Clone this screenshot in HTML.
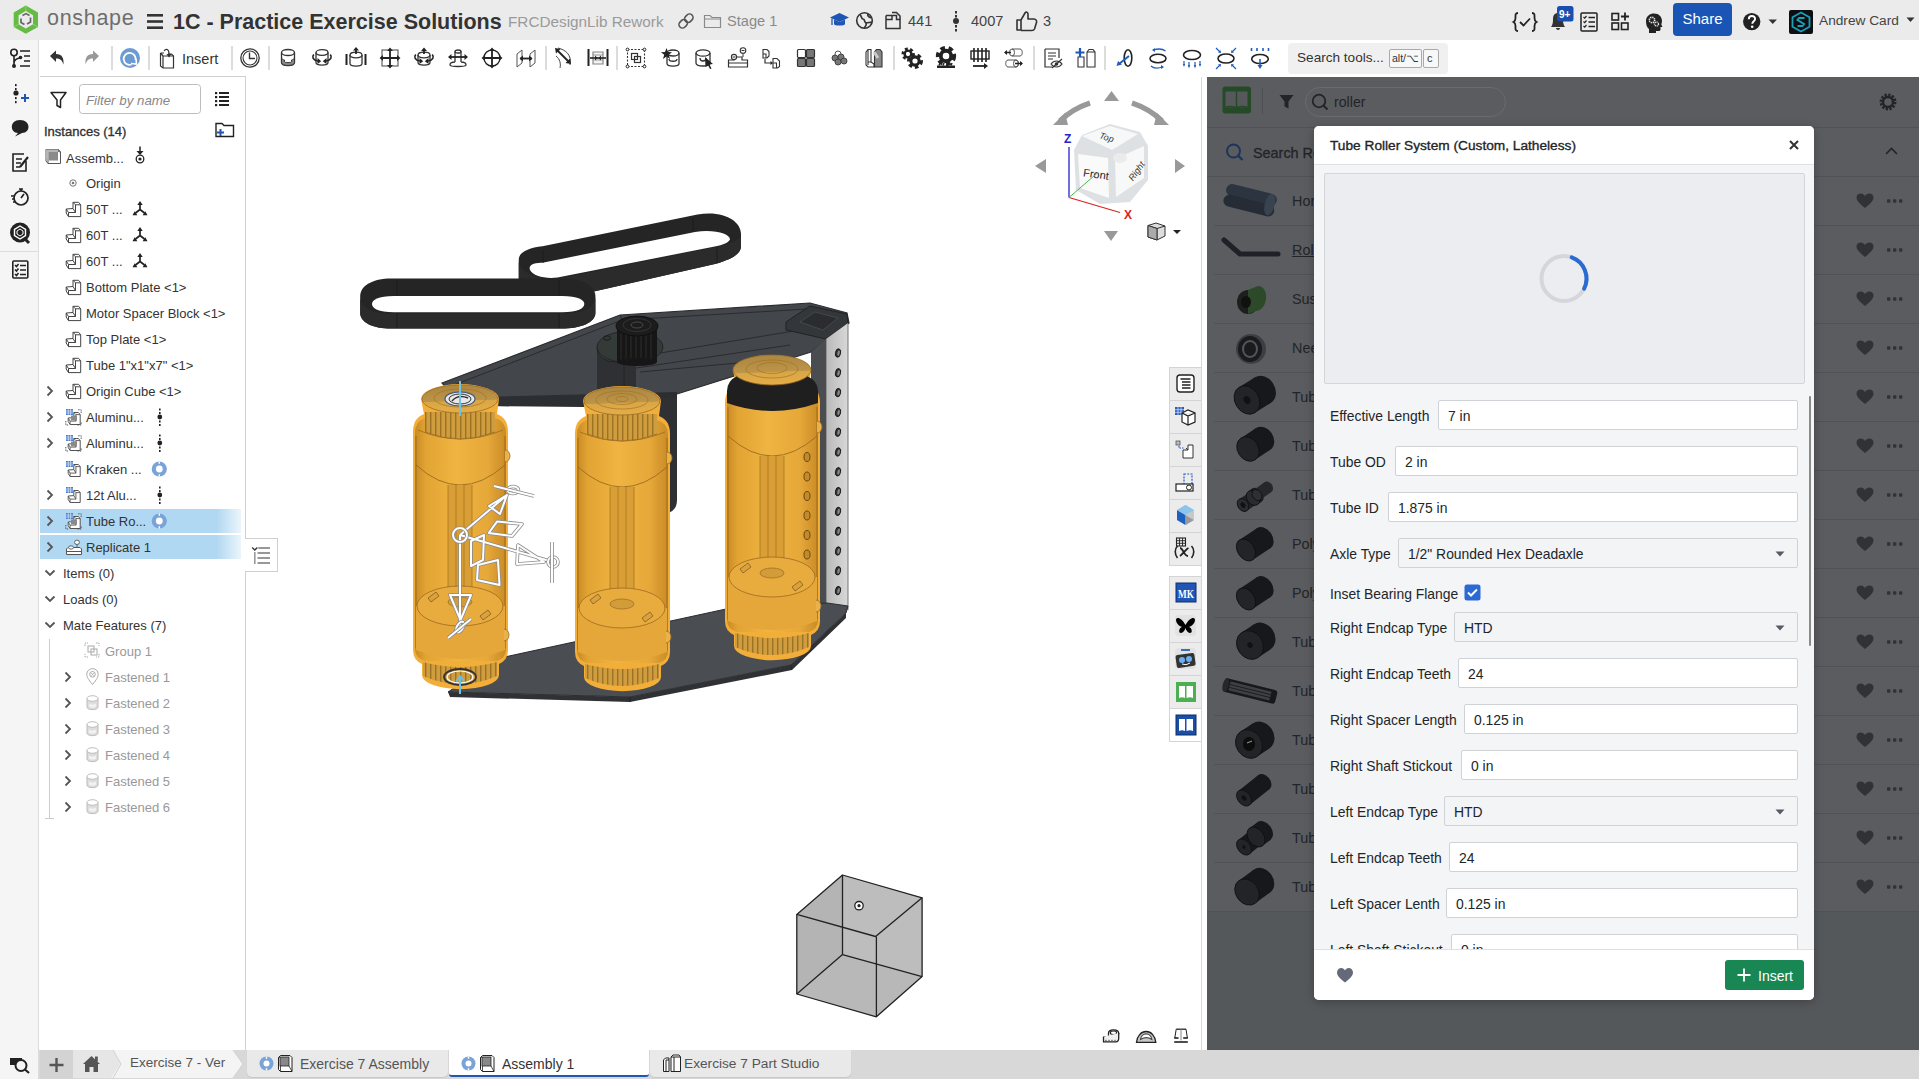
<!DOCTYPE html>
<html><head><meta charset="utf-8"><style>
*{box-sizing:border-box;margin:0;padding:0}
html,body{width:1919px;height:1079px;overflow:hidden;background:#fff;font-family:"Liberation Sans",sans-serif;color:#333}
.a{position:absolute}
.t{position:absolute;white-space:nowrap;font-family:"Liberation Sans",sans-serif}
svg{position:absolute;overflow:visible}

</style></head><body>
<div class="a" style="left:0;top:0;width:1919px;height:40px;background:#ebebeb"></div>
<svg style="left:0;top:0" width="1919" height="40">
 <path d="M25.8,5.5 L38,12.4 V27 L25.8,33.8 L13.7,27 V12.4Z M25.8,11 L33,15.2 V24.2 L25.8,28.4 L18.6,24.2 V15.2Z" fill="#66bb44" fill-rule="evenodd"/>
 <path d="M25.8,5.5 L25.8,11 M38,27 L33,24.2 M13.7,27 L18.6,24.2" stroke="#8fd46a" stroke-width="1"/>
 <path d="M22.5,15.5 L26,13.6 L29.5,15.5 M30.5,17.5 V22 L27,24 M24.5,24.5 L21,22.5 V18.5" stroke="#666" stroke-width="1.7" fill="none"/>
 <rect x="147" y="14" width="16" height="2.6" fill="#333"/><rect x="147" y="20.2" width="16" height="2.6" fill="#333"/><rect x="147" y="26.4" width="16" height="2.6" fill="#333"/>
</svg>
<div class="t" style="left:47px;top:6px;font-size:21.5px;line-height:24px;color:#6e6e6e;letter-spacing:0.7px">onshape</div>
<div class="t" style="left:173px;top:9px;font-size:21.5px;line-height:26px;font-weight:bold;color:#333">1C - Practice Exercise Solutions</div>
<div class="t" style="left:508px;top:12px;font-size:15.3px;line-height:20px;color:#9a9a9a">FRCDesignLib Rework</div>
<div class="t" style="left:727px;top:11px;font-size:14.6px;line-height:20px;color:#8a8a8a">Stage 1</div>
<div class="t" style="left:908px;top:11px;font-size:14.6px;line-height:20px;color:#444">441</div>
<div class="t" style="left:971px;top:11px;font-size:14.6px;line-height:20px;color:#444">4007</div>
<div class="t" style="left:1043px;top:11px;font-size:14.6px;line-height:20px;color:#444">3</div>
<div class="a" style="left:1673px;top:3px;width:59px;height:33px;background:#1a55b5;border-radius:4px"></div>
<div class="t" style="left:1673px;top:9px;width:59px;text-align:center;font-size:15px;line-height:20px;color:#fff">Share</div>
<div class="t" style="left:1819px;top:11px;font-size:13.7px;line-height:20px;color:#444">Andrew Card</div>
<svg style="left:676px;top:12px" width="20" height="18" viewBox="0 0 20 18"><g transform="rotate(-45 10 9)"><rect x="1.5" y="5.5" width="9" height="7" rx="3.5" fill="none" stroke="#555" stroke-width="1.6"/><rect x="9.5" y="5.5" width="9" height="7" rx="3.5" fill="none" stroke="#555" stroke-width="1.6"/></g></svg>
<svg style="left:703px;top:12px" width="20" height="18" viewBox="0 0 20 18"><path d="M1.5,3.5 H7 L9,5.5 H17.5 V15.5 H1.5Z" fill="none" stroke="#8a8a8a" stroke-width="1.2"/><path d="M1.5,7 H17.5" stroke="#8a8a8a" stroke-width="1"/></svg>
<svg style="left:829px;top:11px" width="22" height="18" viewBox="0 0 22 18"><path d="M1,6.5 L10.5,2 L20,6.5 L10.5,11Z" fill="#1f56b3"/><path d="M5,8.5 V13 C5,15 16,15 16,13 V8.5 L10.5,11Z" fill="#1f56b3"/><path d="M3,7.5 V14" stroke="#1f56b3" stroke-width="1.3"/></svg>
<svg style="left:855px;top:11px" width="20" height="20" viewBox="0 0 20 20"><circle cx="9.5" cy="9.5" r="7.8" fill="none" stroke="#333" stroke-width="1.6"/><path d="M5,4 C7,5 6,8 8,8 C10,8 9,11 11,12 C12,14 10,16 9,17 M13,3 C12,5 14,6 16,7 M11,12 C13,11 15,12 17,11" stroke="#333" stroke-width="1.7" fill="none"/></svg>
<svg style="left:883px;top:11px" width="20" height="20" viewBox="0 0 20 20"><path d="M3,4.5 H9 M3,4.5 V17.5 H17 V8.5 H13.5 V4.5 H9 V8.5 H3" fill="none" stroke="#333" stroke-width="1.5"/><path d="M9,1.5 H13.5 L17,5 V8.5" fill="none" stroke="#333" stroke-width="1.5"/></svg>
<svg style="left:951px;top:10px" width="10" height="22" viewBox="0 0 10 22"><g fill="#333"><rect x="4" y="1" width="2" height="2.5"/><rect x="4" y="5" width="2" height="2.5"/><circle cx="5" cy="11" r="3"/><rect x="4" y="15" width="2" height="2.5"/><rect x="4" y="19" width="2" height="2.5"/></g></svg>
<svg style="left:1015px;top:10px" width="24" height="22" viewBox="0 0 24 22"><path d="M2,10 H6 V20 H2Z M6,10 L10,3 C11,1.5 13,2 13,4 V9 H19 C21,9 22,11 21.5,12.5 L19.5,19 C19,20 18,20.5 17,20.5 H6" fill="none" stroke="#333" stroke-width="1.6" stroke-linejoin="round"/></svg>
<svg style="left:1512px;top:11px" width="26" height="22" viewBox="0 0 26 22"><path d="M6,2 C3,2 3.5,4 3.5,7 C3.5,9.5 2.5,10.5 1.5,11 C2.5,11.5 3.5,12.5 3.5,15 C3.5,18 3,20 6,20 M20,2 C23,2 22.5,4 22.5,7 C22.5,9.5 23.5,10.5 24.5,11 C23.5,11.5 22.5,12.5 22.5,15 C22.5,18 23,20 20,20" fill="none" stroke="#222" stroke-width="1.8"/><path d="M8,11 L11.5,14.5 L18,7.5" fill="none" stroke="#222" stroke-width="1.8"/></svg>
<svg style="left:1546px;top:5px" width="30" height="28" viewBox="0 0 30 28"><path d="M5,22 H19 C17.5,20 17,18 17,14 C17,10 15,8 12,8 C9,8 7,10 7,14 C7,18 6.5,20 5,22Z" fill="#333"/><path d="M10,23 C10,25.5 14,25.5 14,23Z" fill="#333"/><rect x="11" y="1" width="16.5" height="15.5" rx="2.5" fill="#1a4fb0"/><text x="13" y="13" font-family="Liberation Sans" font-weight="bold" font-size="10" fill="#fff">9+</text></svg>
<svg style="left:1579px;top:11px" width="20" height="22" viewBox="0 0 20 22"><rect x="2" y="2" width="16" height="18" rx="1" fill="none" stroke="#222" stroke-width="1.5"/><path d="M4.5,6 L5.7,7.2 L7.5,5 M4.5,10.5 L5.7,11.7 L7.5,9.5 M4.5,15 L5.7,16.2 L7.5,14" fill="none" stroke="#222" stroke-width="1.2"/><path d="M9.5,6.5 H16 M9.5,11 H16 M9.5,15.5 H16" stroke="#222" stroke-width="1.5"/></svg>
<svg style="left:1610px;top:11px" width="22" height="22" viewBox="0 0 22 22"><rect x="2" y="2.5" width="6.5" height="6.5" fill="none" stroke="#222" stroke-width="1.6"/><rect x="2" y="12" width="6.5" height="6.5" fill="none" stroke="#222" stroke-width="1.6"/><rect x="11.5" y="12" width="6.5" height="6.5" fill="none" stroke="#222" stroke-width="1.6"/><path d="M15,1.5 V9.5 M11,5.5 H19" stroke="#222" stroke-width="1.8"/></svg>
<svg style="left:1643px;top:12px" width="22" height="22" viewBox="0 0 22 22"><path d="M3,9 C3,4 7,1.5 11,1.5 C16,1.5 19,5 19,9 C19,11 18,12 18.5,13 L19.5,15 H17.5 V17.5 C17.5,18.5 16.5,19 15.5,19 H13 V21 H6 V17 C4,15.5 3,13 3,9Z" fill="#222"/><circle cx="9" cy="8" r="2.7" fill="none" stroke="#ebebeb" stroke-width="1.6" stroke-dasharray="1.3 0.8"/><circle cx="13.5" cy="12" r="2" fill="none" stroke="#ebebeb" stroke-width="1.4" stroke-dasharray="1 0.7"/></svg>
<svg style="left:1742px;top:12px" width="22" height="22" viewBox="0 0 22 22"><circle cx="9.7" cy="9.6" r="8.7" fill="#222"/><path d="M6.8,7.2 C6.8,5 8.2,4 9.9,4 C11.8,4 13.1,5.2 13.1,6.9 C13.1,9.3 10.3,9.3 10.3,11.8" fill="none" stroke="#fff" stroke-width="1.9"/><circle cx="10.2" cy="14.8" r="1.3" fill="#fff"/></svg>
<svg style="left:1768px;top:19px" width="10" height="6" viewBox="0 0 10 6"><path d="M0.5,0.5 H9 L4.75,5Z" fill="#333"/></svg>
<svg style="left:1789px;top:10px" width="24" height="24" viewBox="0 0 24 24"><rect x="0" y="0" width="24" height="24" rx="2" fill="#0d0f12"/><path d="M12,2.5 L20.5,7.3 V16.7 L12,21.5 L3.5,16.7 V7.3Z" fill="none" stroke="#1aa0b8" stroke-width="1.8"/><path d="M15.5,8 H10 L8.5,10 L15,14 L13.5,16 H8.5" fill="none" stroke="#1aa0b8" stroke-width="2"/></svg>
<svg style="left:1906px;top:17px" width="10" height="6" viewBox="0 0 10 6"><path d="M0.5,0.5 H8.5 L4.5,5Z" fill="#333"/></svg><div class="a" style="left:0;top:40px;width:39px;height:1039px;background:#f5f5f5;border-right:1px solid #dcdcdc"></div>
<div class="a" style="left:40px;top:76px;width:206px;height:974px;background:#fff;border-top:1px solid #d0d0d0;border-right:1px solid #d0d0d0"></div>
<div class="a" style="left:1288px;top:43px;width:160px;height:31px;background:#f0f0f0;border-radius:4px"></div>
<div class="t" style="left:1297px;top:48px;font-size:13.6px;line-height:20px;color:#333">Search tools...</div>
<div class="a" style="left:1389px;top:49px;width:33px;height:19px;border:1px solid #aaa;border-radius:2px;background:#f8f8f8"></div>
<div class="t" style="left:1392px;top:49px;font-size:10.5px;line-height:19px;color:#333">alt/⌥</div>
<div class="a" style="left:1423px;top:49px;width:16px;height:19px;border:1px solid #aaa;border-radius:2px;background:#f8f8f8"></div>
<div class="t" style="left:1427px;top:49px;font-size:11px;line-height:18px;color:#333">c</div>
<div class="t" style="left:182px;top:49px;font-size:14.5px;line-height:20px;color:#333">Insert</div>
<svg style="left:44.5px;top:46px" width="24" height="24" viewBox="0 0 24 24"><path d="M5,10 L11,4.5 V8 C17,8 19,12 18.5,18.5 C17,14 15,12.5 11,12.5 V16 Z" fill="#333"/></svg>
<svg style="left:80px;top:46px" width="24" height="24" viewBox="0 0 24 24"><path d="M19,10 L13,4.5 V8 C7,8 5,12 5.5,18.5 C7,14 9,12.5 13,12.5 V16 Z" fill="#999"/></svg>
<div class="a" style="left:111px;top:46px;width:2px;height:24px;background:#dcdcdc"></div>
<svg style="left:118px;top:46px" width="24" height="24" viewBox="0 0 24 24"><circle cx="12" cy="12" r="10" fill="#6c9bd2"/><path d="M13.5,18.5 A6,6 0 1 1 17.5,14" stroke="#fff" stroke-width="1.8" fill="none"/><path d="M18,12.5 L18.5,18 L13,17.5" stroke="#fff" stroke-width="1.6" fill="none"/></svg>
<div class="a" style="left:148px;top:46px;width:2px;height:24px;background:#dcdcdc"></div>
<svg style="left:156px;top:46px" width="24" height="24" viewBox="0 0 24 24"><path d="M4.5,7 V20 L7,22 H17.5 V10 L15.5,8 H12" stroke="#333" stroke-width="1.2" fill="none"/><path d="M4.5,7 H8 M7,22 V10 H17.5 M7,10 L4.5,7" stroke="#333" stroke-width="1.2" fill="none"/><path d="M8,5 C10,2 13,3 13,8" stroke="#333" stroke-width="1.2" fill="none"/><path d="M10.5,8 L13,11.5 L15.5,8Z" fill="#333"/></svg>
<div class="a" style="left:231px;top:46px;width:2px;height:24px;background:#dcdcdc"></div>
<svg style="left:238px;top:46px" width="24" height="24" viewBox="0 0 24 24"><circle cx="12" cy="12" r="9.2" stroke="#333" stroke-width="1.3" fill="none"/><circle cx="12" cy="12" r="7" stroke="#333" stroke-width="1.1" fill="none"/><path d="M11.5,6.5 V12.5 H17" stroke="#333" stroke-width="1.4" fill="none"/></svg>
<div class="a" style="left:268px;top:46px;width:2px;height:24px;background:#dcdcdc"></div>
<svg style="left:276px;top:46px" width="24" height="24" viewBox="0 0 24 24"><ellipse cx="12" cy="6.5" rx="6.5" ry="3" stroke="#333" stroke-width="1.3" fill="#fff"/><path d="M5.5,6.5 V16.5 C5.5,20.5 18.5,20.5 18.5,16.5 V6.5" stroke="#333" stroke-width="1.3" fill="none"/><path d="M5.5,11 C5.5,14 8.5,14 8.5,14 V15.5 C8.5,17 15.5,17 15.5,15.5 V14 C15.5,14 18.5,14 18.5,11 V16.5 C18.5,20.5 5.5,20.5 5.5,16.5Z" fill="#888" stroke="#333" stroke-width="1"/></svg>
<svg style="left:310px;top:46px" width="24" height="24" viewBox="0 0 24 24"><ellipse cx="12" cy="6.5" rx="6" ry="2.8" stroke="#333" stroke-width="1.3" fill="none"/><path d="M6,6.5 V16.5 C6,20 18,20 18,16.5 V6.5" stroke="#333" stroke-width="1.3" fill="none"/><path d="M3.8,8.5 C1.5,11 3,14 8,15 M20.2,8.5 C22.5,11 21,14 16,15" stroke="#222" stroke-width="1.7" fill="none"/><path d="M7.5,12 L11.2,15.2 L7.5,18Z M16.5,12 L12.8,15.2 L16.5,18Z" fill="#222"/></svg>
<svg style="left:344px;top:46px" width="24" height="24" viewBox="0 0 24 24"><ellipse cx="12" cy="9" rx="6" ry="2.8" stroke="#333" stroke-width="1.3" fill="none"/><path d="M6,9 V17.5 C6,21 18,21 18,17.5 V9" stroke="#333" stroke-width="1.3" fill="none"/><path d="M12,8 V3" stroke="#222" stroke-width="1.8"/><path d="M9,4.5 L12,1 L15,4.5Z" fill="#222"/><rect x="1.5" y="8" width="2" height="11" fill="#222"/><rect x="20.5" y="8" width="2" height="11" fill="#222"/></svg>
<svg style="left:378px;top:46px" width="24" height="24" viewBox="0 0 24 24"><rect x="4" y="4" width="16" height="16" stroke="#444" stroke-width="1" fill="none"/><path d="M12,3 V21 M3,12 H21" stroke="#222" stroke-width="1.8"/><path d="M9,5 L12,1.5 L15,5Z M9,19 L12,22.5 L15,19Z M5,9 L1.5,12 L5,15Z M19,9 L22.5,12 L19,15Z" fill="#222"/></svg>
<svg style="left:412px;top:46px" width="24" height="24" viewBox="0 0 24 24"><ellipse cx="12" cy="9" rx="6" ry="2.8" stroke="#333" stroke-width="1.3" fill="none"/><path d="M6,9 V16.5 C6,20 18,20 18,16.5 V9" stroke="#333" stroke-width="1.3" fill="none"/><path d="M12,8 V3.5" stroke="#222" stroke-width="1.8"/><path d="M9,5 L12,1.5 L15,5Z" fill="#222"/><path d="M3.8,8.5 C1.5,11 3,14 8,15 M20.2,8.5 C22.5,11 21,14 16,15" stroke="#222" stroke-width="1.7" fill="none"/><path d="M7.5,12 L11.2,15.2 L7.5,18Z M16.5,12 L12.8,15.2 L16.5,18Z" fill="#222"/></svg>
<svg style="left:446px;top:46px" width="24" height="24" viewBox="0 0 24 24"><ellipse cx="12" cy="5.5" rx="3" ry="1.5" stroke="#333" stroke-width="1.3" fill="none"/><path d="M9,5.5 V16 M15,5.5 V16 M9,16 C5,16 4,17 4,19 C4,21 20,21 20,19 C20,17 19,16 15,16" stroke="#333" stroke-width="1.3" fill="none"/><path d="M3,11 H21" stroke="#222" stroke-width="1.8"/><path d="M5.5,8 L2,11 L5.5,14Z M18.5,8 L22,11 L18.5,14Z" fill="#222"/></svg>
<svg style="left:480px;top:46px" width="24" height="24" viewBox="0 0 24 24"><circle cx="12" cy="12" r="8" stroke="#222" stroke-width="1.4" fill="none"/><path d="M12,3 V21 M3,12 H21" stroke="#222" stroke-width="1.8"/><path d="M9,5 L12,1.5 L15,5Z M9,19 L12,22.5 L15,19Z M5,9 L1.5,12 L5,15Z M19,9 L22.5,12 L19,15Z" fill="#222"/></svg>
<svg style="left:514px;top:46px" width="24" height="24" viewBox="0 0 24 24"><path d="M3,8 L8,4 V17 L3,21Z M16,8 L21,4 V17 L16,21Z" stroke="#555" stroke-width="1" fill="none"/><path d="M6,12.5 H18" stroke="#222" stroke-width="1.8"/><path d="M9,9.5 L5.5,12.5 L9,15.5Z M15,9.5 L18.5,12.5 L15,15.5Z" fill="#222"/></svg>
<div class="a" style="left:545px;top:46px;width:2px;height:24px;background:#dcdcdc"></div>
<svg style="left:552px;top:46px" width="24" height="24" viewBox="0 0 24 24"><path d="M6,2 C14,4 20,9 18,19 M4,10 C8,13 9,18 8,22" stroke="#444" stroke-width="1" fill="none"/><path d="M5,4 L17,16" stroke="#222" stroke-width="1.8"/><path d="M3,2 L8.5,3 L4,7.5Z M19,18 L13.5,17 L18,12.5Z" fill="#222"/></svg>
<svg style="left:586.3px;top:46px" width="24" height="24" viewBox="0 0 24 24"><rect x="1.5" y="3" width="2" height="17" fill="#222"/><rect x="20.5" y="3" width="2" height="17" fill="#222"/><path d="M7,6 H17 V18 H7Z" stroke="#888" stroke-width="1.2" fill="#f3f3f3"/><path d="M7,9 H17 M7,14 H17" stroke="#999" stroke-width="1"/><path d="M4,12 H20" stroke="#222" stroke-width="1.6"/><path d="M9,9.5 L11.5,12 L9,14.5Z M15,9.5 L12.5,12 L15,14.5Z" fill="#222"/></svg>
<div class="a" style="left:616px;top:46px;width:2px;height:24px;background:#dcdcdc"></div>
<svg style="left:624px;top:46px" width="24" height="24" viewBox="0 0 24 24"><rect x="3.5" y="3.5" width="17" height="17" stroke="#333" stroke-width="1.1" stroke-dasharray="2 1.5" fill="none"/><circle cx="3.5" cy="3.5" r="1.4" fill="#fff" stroke="#222"/><circle cx="20.5" cy="3.5" r="1.4" fill="#fff" stroke="#222"/><circle cx="3.5" cy="20.5" r="1.4" fill="#fff" stroke="#222"/><circle cx="20.5" cy="20.5" r="1.4" fill="#fff" stroke="#222"/><rect x="7.5" y="7.5" width="6" height="6" stroke="#333" stroke-width="1.2" fill="none"/><rect x="10.5" y="10.5" width="6" height="6" stroke="#333" stroke-width="1.2" fill="none"/></svg>
<svg style="left:658.5px;top:46px" width="24" height="24" viewBox="0 0 24 24"><ellipse cx="14" cy="7" rx="6" ry="3" stroke="#333" stroke-width="1.3" fill="none"/><path d="M8,7 V17.5 C8,21 20,21 20,17.5 V7" stroke="#333" stroke-width="1.3" fill="none"/><path d="M10,13 C10,16 18,16 18,13" stroke="#333" stroke-width="1.3" fill="none"/><path d="M7.5,2 L9,6 L13,6.2 L9.8,8.8 L11,13 L7.5,10.5 L4,13 L5.2,8.8 L2,6.2 L6,6Z" fill="#222"/></svg>
<svg style="left:692px;top:46px" width="24" height="24" viewBox="0 0 24 24"><ellipse cx="11" cy="7" rx="7" ry="3.2" stroke="#333" stroke-width="1.3" fill="none"/><path d="M4,7 V17 C4,21 18,21 18,17 V7" stroke="#333" stroke-width="1.3" fill="none"/><path d="M8,12 C8,16 14,16 14,12" stroke="#333" stroke-width="1.3" fill="none"/><path d="M13,11 L21,18 L17.5,18.5 L19.5,22.5 L18,23 L16,19 L13.5,21Z" fill="#222"/></svg>
<svg style="left:726.3px;top:46px" width="24" height="24" viewBox="0 0 24 24"><path d="M2.5,14 H8 V11 H16 V14 H21.5 V21 H2.5Z M2.5,17 H21.5" stroke="#333" stroke-width="1.2" fill="none"/><circle cx="8" cy="11" r="2.6" fill="#fff" stroke="#333" stroke-width="1.1"/><circle cx="17" cy="4.5" r="2.8" fill="#fff" stroke="#333" stroke-width="1.1"/><path d="M17,7.5 V11 M6.5,11 H9.5 M15.5,4.5 H18.5" stroke="#333" stroke-width="1"/></svg>
<svg style="left:760px;top:46px" width="24" height="24" viewBox="0 0 24 24"><path d="M3,3.5 H7 L9,5.5 V10 L7,12 H3 Z M3,3.5 V8 H6 V12" stroke="#333" stroke-width="1.1" fill="none"/><path d="M13,12.5 H17 L19.5,15 V20.5 L17.5,22 H13 Z M13,12.5 V17 H16.5 V22" stroke="#333" stroke-width="1.1" fill="none"/><path d="M5,13 V17 H11" stroke="#333" stroke-width="1.2" fill="none"/><path d="M10.5,15 L13,17 L10.5,19Z" fill="#222"/></svg>
<svg style="left:794.2px;top:46px" width="24" height="24" viewBox="0 0 24 24"><rect x="3.5" y="3.5" width="8" height="8" rx="1" fill="#fff" stroke="#333" stroke-width="1.2"/><rect x="12.5" y="3.5" width="8" height="8" rx="1" fill="#777" stroke="#333" stroke-width="1.2"/><rect x="3.5" y="12.5" width="8" height="8" rx="1" fill="#777" stroke="#333" stroke-width="1.2"/><rect x="12.5" y="12.5" width="8" height="8" rx="1" fill="#777" stroke="#333" stroke-width="1.2"/></svg>
<svg style="left:828.4px;top:46px" width="24" height="24" viewBox="0 0 24 24"><circle cx="10" cy="8" r="3" fill="#fff" stroke="#555"/><circle cx="7" cy="12" r="3" fill="#777" stroke="#444"/><circle cx="13" cy="11" r="3" fill="#777" stroke="#444"/><circle cx="10" cy="16" r="3" fill="#777" stroke="#444"/><circle cx="16" cy="15" r="3" fill="#777" stroke="#444"/></svg>
<svg style="left:862px;top:46px" width="24" height="24" viewBox="0 0 24 24"><path d="M4,6 L6,3.5 H9 V16 L12,18 V21 H6 L4,19Z M6,3.5 V19 M9,16 H6" stroke="#333" stroke-width="1.1" fill="none"/><path d="M12.5,21 V6 L14.5,3.5 H18 L20,6 V21Z" fill="#888" stroke="#333" stroke-width="1.1"/><path d="M12,6 L16,12" stroke="#ccc" stroke-width="3"/></svg>
<div class="a" style="left:893px;top:46px;width:2px;height:24px;background:#dcdcdc"></div>
<svg style="left:900px;top:46px" width="24" height="24" viewBox="0 0 24 24"><circle cx="8" cy="8" r="4.5" fill="none" stroke="#222" stroke-width="4.05" stroke-dasharray="2.475 2.025"/><circle cx="8" cy="8" r="3.375" fill="none" stroke="#222" stroke-width="2.475"/><circle cx="15" cy="15" r="5.5" fill="none" stroke="#222" stroke-width="4.95" stroke-dasharray="3.0250000000000004 2.475"/><circle cx="15" cy="15" r="4.125" fill="none" stroke="#222" stroke-width="3.0250000000000004"/></svg>
<svg style="left:934.2px;top:46px" width="24" height="24" viewBox="0 0 24 24"><circle cx="12" cy="10" r="7" fill="none" stroke="#222" stroke-width="6.3" stroke-dasharray="3.8500000000000005 3.15"/><circle cx="12" cy="10" r="5.25" fill="none" stroke="#222" stroke-width="3.8500000000000005"/><rect x="3" y="19.5" width="18" height="2.5" fill="#222"/><path d="M5,19.5 L6,17 M9,19.5 L10,17 M13,19.5 L14,17 M17,19.5 L18,17" stroke="#222" stroke-width="1.5"/></svg>
<svg style="left:968px;top:46px" width="24" height="24" viewBox="0 0 24 24"><rect x="3" y="5" width="18" height="8" fill="none" stroke="#222" stroke-width="1.4"/><path d="M6,2 V16 M10,2 V16 M14,2 V16 M18,2 V16" stroke="#222" stroke-width="1.6"/><path d="M5,20 H17" stroke="#222" stroke-width="1.8"/><path d="M16,17 L20,20 L16,23Z" fill="#222"/></svg>
<svg style="left:1002px;top:46px" width="24" height="24" viewBox="0 0 24 24"><path d="M10,3 H18 C21,3 21,10 18,10 H10" stroke="#555" stroke-width="1" fill="none"/><ellipse cx="10" cy="6.5" rx="2.5" ry="3.5" fill="none" stroke="#555"/><path d="M6,14 H14 C17,14 17,21 14,21 H6 C3,21 3,14 6,14" stroke="#555" stroke-width="1" fill="none"/><ellipse cx="14" cy="17.5" rx="2.5" ry="3.5" fill="none" stroke="#555"/><path d="M3,6.5 H9 M13,17.5 H20" stroke="#222" stroke-width="1.6"/><path d="M5,4 L2,6.5 L5,9Z M18,15 L21,17.5 L18,20Z" fill="#222"/></svg>
<div class="a" style="left:1033px;top:46px;width:2px;height:24px;background:#dcdcdc"></div>
<svg style="left:1041px;top:46px" width="24" height="24" viewBox="0 0 24 24"><path d="M4,3 H18 V12 M4,3 V21 H11" stroke="#333" stroke-width="1.2" fill="none"/><path d="M7,7 H15 M7,10 H15 M7,13 H12" stroke="#333" stroke-width="1.2"/><path d="M10,18 C13,14 18,14 21,18 C18,22 13,22 10,18Z" fill="none" stroke="#333" stroke-width="1.2"/><circle cx="15.5" cy="18" r="1.8" fill="#333"/><path d="M11,22 L21,13" stroke="#333" stroke-width="1.2"/></svg>
<svg style="left:1074.3px;top:46px" width="24" height="24" viewBox="0 0 24 24"><path d="M4,11 H10 V21 H4Z" stroke="#333" stroke-width="1.1" fill="none"/><path d="M13,6 L15,3.5 H19 L21,6 V21 H13Z M13,6 H21" stroke="#333" stroke-width="1.1" fill="none"/><path d="M1.5,6.5 H10.5 M6,2 V11" stroke="#1f56b3" stroke-width="2.2"/></svg>
<div class="a" style="left:1104px;top:46px;width:2px;height:24px;background:#dcdcdc"></div>
<svg style="left:1113.2px;top:46px" width="24" height="24" viewBox="0 0 24 24"><ellipse cx="15" cy="12" rx="3.8" ry="8.2" stroke="#222" stroke-width="1.6" fill="none"/><path d="M16,10 L6,18" stroke="#1f5fb8" stroke-width="2"/><path d="M3.5,20 L5,15 L9,18.5Z" fill="#1f5fb8"/></svg>
<svg style="left:1146px;top:46px" width="24" height="24" viewBox="0 0 24 24"><ellipse cx="12" cy="12.5" rx="8" ry="4.2" stroke="#222" stroke-width="1.6" fill="none"/><path d="M7,4 C12,2.5 17,3 19.5,5 M5,20 C7,22 12,22.5 17,21" stroke="#1f5fb8" stroke-width="1.3" fill="none"/><path d="M6,4 L9,2 L9,6Z M18,21 L15,19 L15,23Z" fill="#1f5fb8"/></svg>
<svg style="left:1180px;top:46px" width="24" height="24" viewBox="0 0 24 24"><ellipse cx="12" cy="9" rx="8.5" ry="4.5" stroke="#222" stroke-width="1.6" fill="none"/><path d="M4,15 V19 M9,16 V20.5 M15,16 V20.5 M20,15 V19" stroke="#1f5fb8" stroke-width="1.2"/><path d="M2.8,18 L4,21 L5.2,18Z M7.8,19 L9,22.5 L10.2,19Z M13.8,19 L15,22.5 L16.2,19Z M18.8,18 L20,21 L21.2,18Z" fill="#1f5fb8"/></svg>
<svg style="left:1213.8px;top:46px" width="24" height="24" viewBox="0 0 24 24"><ellipse cx="12" cy="12.5" rx="8" ry="4.5" stroke="#222" stroke-width="1.6" fill="none"/><path d="M2,2 L6,6 M22,2 L18,6 M2,23 L6,19 M22,23 L18,19" stroke="#1f5fb8" stroke-width="1.2"/><path d="M7,7 L4,6.5 L6.5,4Z M17,7 L20,6.5 L17.5,4Z M7,18 L4,18.5 L6.5,21Z M17,18 L20,18.5 L17.5,21Z" fill="#1f5fb8"/></svg>
<svg style="left:1248px;top:46px" width="24" height="24" viewBox="0 0 24 24"><ellipse cx="12" cy="13" rx="8.3" ry="4.5" stroke="#222" stroke-width="1.6" fill="none"/><path d="M3.5,2 V5 M9,2 V5 M15,2 V5 M20.5,2 V5" stroke="#1f5fb8" stroke-width="1.6"/><path d="M12,13 V21" stroke="#1f5fb8" stroke-width="1.6"/><path d="M9.5,19 L12,23 L14.5,19Z" fill="#1f5fb8"/></svg><svg style="left:0px;top:40px" width="39" height="250" viewBox="0 0 39 250">
<g stroke="#222" stroke-width="1.6" fill="none">
 <circle cx="14" cy="12.5" r="3.2"/><path d="M14,16 V26 M14,23 Q14,19 20,18"/>
 <path d="M20,11 H30 M24,16 H30 M24,21 H30 M20,26 H30"/>
</g>
<circle cx="14" cy="26" r="2" fill="#222"/><circle cx="20.5" cy="17.5" r="1.8" fill="#222"/>
<g fill="#222"><rect x="15" y="44" width="1.6" height="2.2"/><rect x="15" y="48" width="1.6" height="2.2"/><circle cx="16" cy="53" r="2.6"/><rect x="15" y="57" width="1.6" height="2.2"/><rect x="15" y="61" width="1.6" height="2.2"/></g>
<path d="M21,58 H29 M25,54 V62" stroke="#1f56b3" stroke-width="2"/>
<path d="M20,80 C9,80 10,93 18,93 L15,96.5 L22,93 C31,93 31,80 20,80 Z" fill="#222"/>
<g stroke="#222" stroke-width="1.6" fill="none"><path d="M26,121 V131 H13 V114 H24"/><path d="M16,119 H22 M16,123 H21 M16,127 H20"/><path d="M20,127 L28,117" stroke-width="2.2"/></g>
<g stroke="#222" stroke-width="1.7" fill="none"><circle cx="21" cy="158" r="7"/><path d="M21,158 L24,154 M19,149 H23 M21,149 V151 M11,156 H14 M12,159 H14 M13,162 H15"/></g>
<circle cx="20" cy="192.5" r="10" fill="#222"/><polygon points="20,186 25.5,189.3 25.5,195.7 20,199 14.5,195.7 14.5,189.3" fill="none" stroke="#fff" stroke-width="1.4"/><path d="M20,189 L23,191 V194 L20,196 L17,194 V191Z" fill="none" stroke="#fff" stroke-width="1"/><path d="M25,199 L29,203" stroke="#222" stroke-width="3"/>
<rect x="0" y="211" width="39" height="1" fill="#ddd"/>
<g stroke="#222" stroke-width="1.6" fill="none"><rect x="12.8" y="221" width="15" height="17" rx="1"/><path d="M15,225 L16.5,226.5 L18.5,224 M15,229.5 L16.5,231 L18.5,228.5 M15,234 L16.5,235.5 L18.5,233 M20,225.5 H26 M20,230 H26 M20,234.5 H26"/></g>
</svg>
<svg style="left:0px;top:1049px" width="39" height="30" viewBox="0 0 39 30"><rect x="10" y="8" width="12" height="7" fill="#222"/><circle cx="21" cy="15.5" r="5.5" fill="#f5f5f5" stroke="#222" stroke-width="2"/><path d="M25,19.5 L29,23" stroke="#222" stroke-width="2.2"/></svg>
<svg style="left:40px;top:84px" width="206" height="32" viewBox="0 0 206 32">
<path d="M11,8.5 H26 L20.5,16 V23.5 L17,21.5 V16 Z" fill="none" stroke="#222" stroke-width="1.5" stroke-linejoin="round"/>
<rect x="39.5" y="0.5" width="121" height="29" rx="3" fill="#fff" stroke="#bdbdbd"/>
<g fill="#222"><rect x="175" y="8" width="2.2" height="2.2"/><rect x="179" y="8" width="10" height="2"/><rect x="175" y="12" width="2.2" height="2.2"/><rect x="179" y="12" width="10" height="2"/><rect x="175" y="16" width="2.2" height="2.2"/><rect x="179" y="16" width="10" height="2"/><rect x="175" y="20" width="2.2" height="2.2"/><rect x="179" y="20" width="10" height="2"/></g>
</svg>
<div class="t" style="left:86px;top:91px;font-size:13.3px;line-height:20px;color:#888;font-weight:normal;font-style:italic">Filter by name</div>
<div class="t" style="left:44px;top:121.5px;font-size:13px;line-height:20px;color:#333;font-weight:normal;-webkit-text-stroke:0.35px #333">Instances (14)</div>
<svg style="left:210px;top:120px" width="30" height="20" viewBox="0 0 30 20"><path d="M6,3.5 H12 L14,5.5 H23.5 V16.5 H6 Z" fill="none" stroke="#222" stroke-width="1.4" stroke-dasharray="0"/><path d="M7,12.5 H14 M10.5,9 V16" stroke="#1f56b3" stroke-width="2"/></svg>
<div class="a" style="left:40px;top:509px;width:201px;height:24px;background:linear-gradient(90deg,#b1d8f2 0%,#b1d8f2 88%,rgba(177,216,242,0.25) 100%)"></div>
<div class="a" style="left:40px;top:535px;width:201px;height:24px;background:linear-gradient(90deg,#b1d8f2 0%,#b1d8f2 88%,rgba(177,216,242,0.25) 100%)"></div>
<svg style="left:45px;top:148px" width="17" height="18" viewBox="0 0 17 18"><path d="M1,1.5 L3,3.5 V15.5 H15.5 V4 L13.5,1.5 H1Z" fill="#fff" stroke="#555" stroke-width="1" stroke-linejoin="round"/><path d="M1,1.5 V13 L3,15.5 M3,3.5 H13.5 V1.5 M13.5,3.5 L15.5,4" fill="none" stroke="#555" stroke-width="1"/><rect x="3.5" y="4" width="9.5" height="8.5" fill="#8a8a8a"/><path d="M1,1.5 L3.5,4 V12.5 L1,10Z M1,1.5 H13.5 L13,4 H3.5Z" fill="#b5b5b5"/></svg>
<div class="t" style="left:66px;top:148.5px;font-size:13px;line-height:20px;color:#333;font-weight:normal;">Assemb...</div>
<svg style="left:133px;top:146px" width="14" height="19" viewBox="0 0 14 19"><path d="M7,0.5 V8" stroke="#222" stroke-width="1.5"/><path d="M3.5,5 L7,9 L10.5,5Z" fill="#222"/><circle cx="7" cy="13" r="3.8" fill="none" stroke="#222" stroke-width="1.3"/><circle cx="7" cy="13" r="1.6" fill="#222"/></svg>
<svg style="left:68px;top:178px" width="10" height="10" viewBox="0 0 10 10"><circle cx="5" cy="5" r="3.2" fill="none" stroke="#777" stroke-width="1"/><circle cx="5" cy="5" r="1.3" fill="#777"/></svg>
<div class="t" style="left:86px;top:174px;font-size:13px;line-height:20px;color:#333;font-weight:normal;">Origin</div>
<svg style="left:65px;top:201px" width="18" height="17" viewBox="0 0 18 17"><path d="M1.2,8 L8,7.5 V1.3 H13.6 L15.7,3.8 V15.6 H3.5 L1.2,12 Z" fill="#fff" stroke="#444" stroke-width="1" stroke-linejoin="round"/><path d="M3.5,15.6 V11.5 H10.5 V3.8 H15.7 M1.2,8 L3.5,11.5 M8,1.3 L10.5,3.8 M8,7.5 L10.5,11.5" fill="none" stroke="#444" stroke-width="1" stroke-linejoin="round"/></svg>
<div class="t" style="left:86px;top:200px;font-size:13px;line-height:20px;color:#333;font-weight:normal;">50T ...</div>
<svg style="left:132px;top:201px" width="18" height="17" viewBox="0 0 18 17"><g stroke="#222" stroke-width="1.7"><path d="M8,8.5 V3 M8,8.5 L3.5,12 M8,8.5 L12.5,12"/></g><path d="M8,0 L5.3,4 H10.7Z M0.5,14.3 L5.4,14.2 L2.7,10.3Z M15.5,14.3 L10.6,14.2 L13.3,10.3Z" fill="#222"/></svg>
<svg style="left:65px;top:227px" width="18" height="17" viewBox="0 0 18 17"><path d="M1.2,8 L8,7.5 V1.3 H13.6 L15.7,3.8 V15.6 H3.5 L1.2,12 Z" fill="#fff" stroke="#444" stroke-width="1" stroke-linejoin="round"/><path d="M3.5,15.6 V11.5 H10.5 V3.8 H15.7 M1.2,8 L3.5,11.5 M8,1.3 L10.5,3.8 M8,7.5 L10.5,11.5" fill="none" stroke="#444" stroke-width="1" stroke-linejoin="round"/></svg>
<div class="t" style="left:86px;top:226px;font-size:13px;line-height:20px;color:#333;font-weight:normal;">60T ...</div>
<svg style="left:132px;top:227px" width="18" height="17" viewBox="0 0 18 17"><g stroke="#222" stroke-width="1.7"><path d="M8,8.5 V3 M8,8.5 L3.5,12 M8,8.5 L12.5,12"/></g><path d="M8,0 L5.3,4 H10.7Z M0.5,14.3 L5.4,14.2 L2.7,10.3Z M15.5,14.3 L10.6,14.2 L13.3,10.3Z" fill="#222"/></svg>
<svg style="left:65px;top:253px" width="18" height="17" viewBox="0 0 18 17"><path d="M1.2,8 L8,7.5 V1.3 H13.6 L15.7,3.8 V15.6 H3.5 L1.2,12 Z" fill="#fff" stroke="#444" stroke-width="1" stroke-linejoin="round"/><path d="M3.5,15.6 V11.5 H10.5 V3.8 H15.7 M1.2,8 L3.5,11.5 M8,1.3 L10.5,3.8 M8,7.5 L10.5,11.5" fill="none" stroke="#444" stroke-width="1" stroke-linejoin="round"/></svg>
<div class="t" style="left:86px;top:252px;font-size:13px;line-height:20px;color:#333;font-weight:normal;">60T ...</div>
<svg style="left:132px;top:253px" width="18" height="17" viewBox="0 0 18 17"><g stroke="#222" stroke-width="1.7"><path d="M8,8.5 V3 M8,8.5 L3.5,12 M8,8.5 L12.5,12"/></g><path d="M8,0 L5.3,4 H10.7Z M0.5,14.3 L5.4,14.2 L2.7,10.3Z M15.5,14.3 L10.6,14.2 L13.3,10.3Z" fill="#222"/></svg>
<svg style="left:65px;top:279px" width="18" height="17" viewBox="0 0 18 17"><path d="M1.2,8 L8,7.5 V1.3 H13.6 L15.7,3.8 V15.6 H3.5 L1.2,12 Z" fill="#fff" stroke="#444" stroke-width="1" stroke-linejoin="round"/><path d="M3.5,15.6 V11.5 H10.5 V3.8 H15.7 M1.2,8 L3.5,11.5 M8,1.3 L10.5,3.8 M8,7.5 L10.5,11.5" fill="none" stroke="#444" stroke-width="1" stroke-linejoin="round"/></svg>
<div class="t" style="left:86px;top:278px;font-size:13px;line-height:20px;color:#333;font-weight:normal;">Bottom Plate &lt;1&gt;</div>
<svg style="left:65px;top:305px" width="18" height="17" viewBox="0 0 18 17"><path d="M1.2,8 L8,7.5 V1.3 H13.6 L15.7,3.8 V15.6 H3.5 L1.2,12 Z" fill="#fff" stroke="#444" stroke-width="1" stroke-linejoin="round"/><path d="M3.5,15.6 V11.5 H10.5 V3.8 H15.7 M1.2,8 L3.5,11.5 M8,1.3 L10.5,3.8 M8,7.5 L10.5,11.5" fill="none" stroke="#444" stroke-width="1" stroke-linejoin="round"/></svg>
<div class="t" style="left:86px;top:304px;font-size:13px;line-height:20px;color:#333;font-weight:normal;">Motor Spacer Block &lt;1&gt;</div>
<svg style="left:65px;top:331px" width="18" height="17" viewBox="0 0 18 17"><path d="M1.2,8 L8,7.5 V1.3 H13.6 L15.7,3.8 V15.6 H3.5 L1.2,12 Z" fill="#fff" stroke="#444" stroke-width="1" stroke-linejoin="round"/><path d="M3.5,15.6 V11.5 H10.5 V3.8 H15.7 M1.2,8 L3.5,11.5 M8,1.3 L10.5,3.8 M8,7.5 L10.5,11.5" fill="none" stroke="#444" stroke-width="1" stroke-linejoin="round"/></svg>
<div class="t" style="left:86px;top:330px;font-size:13px;line-height:20px;color:#333;font-weight:normal;">Top Plate &lt;1&gt;</div>
<svg style="left:65px;top:357px" width="18" height="17" viewBox="0 0 18 17"><path d="M1.2,8 L8,7.5 V1.3 H13.6 L15.7,3.8 V15.6 H3.5 L1.2,12 Z" fill="#fff" stroke="#444" stroke-width="1" stroke-linejoin="round"/><path d="M3.5,15.6 V11.5 H10.5 V3.8 H15.7 M1.2,8 L3.5,11.5 M8,1.3 L10.5,3.8 M8,7.5 L10.5,11.5" fill="none" stroke="#444" stroke-width="1" stroke-linejoin="round"/></svg>
<div class="t" style="left:86px;top:356px;font-size:13px;line-height:20px;color:#333;font-weight:normal;">Tube 1"x1"x7" &lt;1&gt;</div>
<svg style="left:45px;top:385px" width="10" height="12" viewBox="0 0 10 12"><path d="M2.5,1.5 L7,6 L2.5,10.5" fill="none" stroke="#555" stroke-width="1.8"/></svg>
<svg style="left:65px;top:383px" width="18" height="17" viewBox="0 0 18 17"><path d="M1.2,8 L8,7.5 V1.3 H13.6 L15.7,3.8 V15.6 H3.5 L1.2,12 Z" fill="#fff" stroke="#444" stroke-width="1" stroke-linejoin="round"/><path d="M3.5,15.6 V11.5 H10.5 V3.8 H15.7 M1.2,8 L3.5,11.5 M8,1.3 L10.5,3.8 M8,7.5 L10.5,11.5" fill="none" stroke="#444" stroke-width="1" stroke-linejoin="round"/></svg>
<div class="t" style="left:86px;top:382px;font-size:13px;line-height:20px;color:#333;font-weight:normal;">Origin Cube &lt;1&gt;</div>
<svg style="left:45px;top:411px" width="10" height="12" viewBox="0 0 10 12"><path d="M2.5,1.5 L7,6 L2.5,10.5" fill="none" stroke="#555" stroke-width="1.8"/></svg>
<svg style="left:65px;top:409px" width="18" height="17" viewBox="0 0 18 17"><path d="M3.2,9 L8.8,8.6 V3.5 H13.4 L15.2,5.6 V15.5 H5.1 L3.2,12.5 Z" fill="#fff" stroke="#555" stroke-width="1" stroke-linejoin="round"/><path d="M5.1,15.5 V12.1 H10.9 V5.6 H15.2 M3.2,9 L5.1,12.1 M8.8,3.5 L10.9,5.6 M8.8,8.6 L10.9,12.1" fill="none" stroke="#555" stroke-width="0.9"/><rect x="6" y="6.5" width="6" height="5" fill="#8a8a8a"/><rect x="1" y="0" width="7" height="6" fill="#4a7fd0"/><path d="M1,2 H8 M1,4 H8 M3.3,0 V6 M5.6,0 V6" stroke="#fff" stroke-width="0.55"/><path d="M0.8,12 V16 H4 M12.5,16 H16.2 V12.5 M16.2,4 V0.8 H13" fill="none" stroke="#555" stroke-width="1" stroke-dasharray="1.4 1"/></svg>
<div class="t" style="left:86px;top:408px;font-size:13px;line-height:20px;color:#333;font-weight:normal;">Aluminu...</div>
<svg style="left:156px;top:408px" width="8" height="18" viewBox="0 0 8 18"><g fill="#222"><rect x="3" y="0.5" width="1.6" height="2"/><rect x="3" y="4" width="1.6" height="2"/><circle cx="3.8" cy="9" r="2.4"/><rect x="3" y="12.5" width="1.6" height="2"/><rect x="3" y="16" width="1.6" height="2"/></g></svg>
<svg style="left:45px;top:437px" width="10" height="12" viewBox="0 0 10 12"><path d="M2.5,1.5 L7,6 L2.5,10.5" fill="none" stroke="#555" stroke-width="1.8"/></svg>
<svg style="left:65px;top:435px" width="18" height="17" viewBox="0 0 18 17"><path d="M3.2,9 L8.8,8.6 V3.5 H13.4 L15.2,5.6 V15.5 H5.1 L3.2,12.5 Z" fill="#fff" stroke="#555" stroke-width="1" stroke-linejoin="round"/><path d="M5.1,15.5 V12.1 H10.9 V5.6 H15.2 M3.2,9 L5.1,12.1 M8.8,3.5 L10.9,5.6 M8.8,8.6 L10.9,12.1" fill="none" stroke="#555" stroke-width="0.9"/><rect x="6" y="6.5" width="6" height="5" fill="#8a8a8a"/><rect x="1" y="0" width="7" height="6" fill="#4a7fd0"/><path d="M1,2 H8 M1,4 H8 M3.3,0 V6 M5.6,0 V6" stroke="#fff" stroke-width="0.55"/><path d="M0.8,12 V16 H4 M12.5,16 H16.2 V12.5 M16.2,4 V0.8 H13" fill="none" stroke="#555" stroke-width="1" stroke-dasharray="1.4 1"/></svg>
<div class="t" style="left:86px;top:434px;font-size:13px;line-height:20px;color:#333;font-weight:normal;">Aluminu...</div>
<svg style="left:156px;top:434px" width="8" height="18" viewBox="0 0 8 18"><g fill="#222"><rect x="3" y="0.5" width="1.6" height="2"/><rect x="3" y="4" width="1.6" height="2"/><circle cx="3.8" cy="9" r="2.4"/><rect x="3" y="12.5" width="1.6" height="2"/><rect x="3" y="16" width="1.6" height="2"/></g></svg>
<svg style="left:65px;top:461px" width="18" height="17" viewBox="0 0 18 17"><path d="M3.2,9 L8.8,8.6 V3.5 H13.4 L15.2,5.6 V15.5 H5.1 L3.2,12.5 Z" fill="#fff" stroke="#555" stroke-width="1" stroke-linejoin="round"/><path d="M5.1,15.5 V12.1 H10.9 V5.6 H15.2 M3.2,9 L5.1,12.1 M8.8,3.5 L10.9,5.6 M8.8,8.6 L10.9,12.1" fill="none" stroke="#555" stroke-width="0.9"/><rect x="1" y="0" width="7" height="6" fill="#4a7fd0"/><path d="M1,2 H8 M1,4 H8 M3.3,0 V6 M5.6,0 V6" stroke="#fff" stroke-width="0.55"/></svg>
<div class="t" style="left:86px;top:460px;font-size:13px;line-height:20px;color:#333;font-weight:normal;">Kraken ...</div>
<svg style="left:151px;top:460.5px" width="17" height="16" viewBox="0 0 17 16"><circle cx="8.3" cy="8" r="7.6" fill="#7aa3d8"/><circle cx="8.3" cy="8" r="3.4" fill="#fff"/><rect x="7.6" y="0.5" width="1.4" height="2.2" fill="#fff"/><rect x="7.6" y="13.3" width="1.4" height="2.2" fill="#fff"/></svg>
<svg style="left:45px;top:489px" width="10" height="12" viewBox="0 0 10 12"><path d="M2.5,1.5 L7,6 L2.5,10.5" fill="none" stroke="#555" stroke-width="1.8"/></svg>
<svg style="left:65px;top:487px" width="18" height="17" viewBox="0 0 18 17"><path d="M3.2,9 L8.8,8.6 V3.5 H13.4 L15.2,5.6 V15.5 H5.1 L3.2,12.5 Z" fill="#fff" stroke="#555" stroke-width="1" stroke-linejoin="round"/><path d="M5.1,15.5 V12.1 H10.9 V5.6 H15.2 M3.2,9 L5.1,12.1 M8.8,3.5 L10.9,5.6 M8.8,8.6 L10.9,12.1" fill="none" stroke="#555" stroke-width="0.9"/><rect x="1" y="0" width="7" height="6" fill="#4a7fd0"/><path d="M1,2 H8 M1,4 H8 M3.3,0 V6 M5.6,0 V6" stroke="#fff" stroke-width="0.55"/></svg>
<div class="t" style="left:86px;top:486px;font-size:13px;line-height:20px;color:#333;font-weight:normal;">12t Alu...</div>
<svg style="left:156px;top:486px" width="8" height="18" viewBox="0 0 8 18"><g fill="#222"><rect x="3" y="0.5" width="1.6" height="2"/><rect x="3" y="4" width="1.6" height="2"/><circle cx="3.8" cy="9" r="2.4"/><rect x="3" y="12.5" width="1.6" height="2"/><rect x="3" y="16" width="1.6" height="2"/></g></svg>
<svg style="left:45px;top:515px" width="10" height="12" viewBox="0 0 10 12"><path d="M2.5,1.5 L7,6 L2.5,10.5" fill="none" stroke="#555" stroke-width="1.8"/></svg>
<svg style="left:65px;top:513px" width="18" height="17" viewBox="0 0 18 17"><path d="M3.2,9 L8.8,8.6 V3.5 H13.4 L15.2,5.6 V15.5 H5.1 L3.2,12.5 Z" fill="#fff" stroke="#555" stroke-width="1" stroke-linejoin="round"/><path d="M5.1,15.5 V12.1 H10.9 V5.6 H15.2 M3.2,9 L5.1,12.1 M8.8,3.5 L10.9,5.6 M8.8,8.6 L10.9,12.1" fill="none" stroke="#555" stroke-width="0.9"/><rect x="6" y="6.5" width="6" height="5" fill="#8a8a8a"/><rect x="1" y="0" width="7" height="6" fill="#4a7fd0"/><path d="M1,2 H8 M1,4 H8 M3.3,0 V6 M5.6,0 V6" stroke="#fff" stroke-width="0.55"/><path d="M0.8,12 V16 H4 M12.5,16 H16.2 V12.5 M16.2,4 V0.8 H13" fill="none" stroke="#555" stroke-width="1" stroke-dasharray="1.4 1"/></svg>
<div class="t" style="left:86px;top:512px;font-size:13px;line-height:20px;color:#333;font-weight:normal;">Tube Ro...</div>
<svg style="left:151px;top:512.5px" width="17" height="16" viewBox="0 0 17 16"><circle cx="8.3" cy="8" r="7.6" fill="#7aa3d8"/><circle cx="8.3" cy="8" r="3.4" fill="#fff"/><rect x="7.6" y="0.5" width="1.4" height="2.2" fill="#fff"/><rect x="7.6" y="13.3" width="1.4" height="2.2" fill="#fff"/></svg>
<svg style="left:45px;top:541px" width="10" height="12" viewBox="0 0 10 12"><path d="M2.5,1.5 L7,6 L2.5,10.5" fill="none" stroke="#555" stroke-width="1.8"/></svg>
<svg style="left:65px;top:539px" width="18" height="17" viewBox="0 0 18 17"><path d="M1.5,10 L3,8.5 H15 L16.5,10 V15.5 H1.5 Z M1.5,12.5 H16.5" fill="#fff" stroke="#555" stroke-width="1"/><ellipse cx="6" cy="8.5" rx="2.6" ry="1.6" fill="#fff" stroke="#555" stroke-width="0.9"/><path d="M12,5 V8.5" stroke="#555" stroke-width="0.9"/><ellipse cx="12" cy="3.3" rx="2.4" ry="2.2" fill="#fff" stroke="#555" stroke-width="0.9"/></svg>
<div class="t" style="left:86px;top:538px;font-size:13px;line-height:20px;color:#333;font-weight:normal;">Replicate 1</div>
<div class="a" style="left:245px;top:538px;width:33px;height:34px;background:#fff;border:1px solid #d0d0d0;border-left:none"></div>
<svg style="left:250px;top:545px" width="24" height="22" viewBox="0 0 24 22"><path d="M2.2,2.5 L4.8,5 L7.4,2.5" fill="none" stroke="#333" stroke-width="1.3"/><path d="M4.8,7 V19" stroke="#999" stroke-width="1.6"/><path d="M8.3,3 H20 M7.5,8 H20 M7.5,13 H20 M7.5,18 H20" stroke="#333" stroke-width="1.1"/></svg>
<svg style="left:44px;top:568px" width="14" height="10" viewBox="0 0 14 10"><path d="M1.5,2.5 L6,7 L10.5,2.5" fill="none" stroke="#555" stroke-width="1.8"/></svg>
<div class="t" style="left:63px;top:564px;font-size:13px;line-height:20px;color:#333;font-weight:normal;">Items (0)</div>
<svg style="left:44px;top:594px" width="14" height="10" viewBox="0 0 14 10"><path d="M1.5,2.5 L6,7 L10.5,2.5" fill="none" stroke="#555" stroke-width="1.8"/></svg>
<div class="t" style="left:63px;top:590px;font-size:13px;line-height:20px;color:#333;font-weight:normal;">Loads (0)</div>
<svg style="left:44px;top:620px" width="14" height="10" viewBox="0 0 14 10"><path d="M1.5,2.5 L6,7 L10.5,2.5" fill="none" stroke="#555" stroke-width="1.8"/></svg>
<div class="t" style="left:63px;top:616px;font-size:13px;line-height:20px;color:#333;font-weight:normal;">Mate Features (7)</div>
<div class="a" style="left:49px;top:639px;width:1px;height:180px;background:#ccc"></div>
<div class="a" style="left:45px;top:818px;width:9px;height:1px;background:#ccc"></div>
<svg style="left:84px;top:642px" width="18" height="18" viewBox="0 0 18 18"><path d="M1,4 V1 H4 M12,1 H15 V4 M15,12 V15 H12 M4,15 H1 V12" fill="none" stroke="#aaa" stroke-width="1" stroke-dasharray="1.5 1"/><rect x="4" y="4" width="6" height="6" fill="none" stroke="#aaa"/><rect x="7" y="7" width="6" height="6" fill="none" stroke="#aaa"/></svg>
<div class="t" style="left:105px;top:642px;font-size:13px;line-height:20px;color:#999;font-weight:normal;">Group 1</div>
<svg style="left:63px;top:671px" width="10" height="12" viewBox="0 0 10 12"><path d="M2.5,1.5 L7,6 L2.5,10.5" fill="none" stroke="#555" stroke-width="1.8"/></svg>
<svg style="left:86px;top:668px" width="14" height="18" viewBox="0 0 14 18"><path d="M6.5,16.5 C2,11 0.8,9 0.8,6.3 A5.7,5.7 0 0 1 12.2,6.3 C12.2,9 11,11 6.5,16.5Z" fill="none" stroke="#aaa" stroke-width="1"/><circle cx="6.5" cy="6.3" r="2.8" fill="none" stroke="#aaa"/><path d="M5,4.8 L8,7.8 M8,4.8 L5,7.8" stroke="#aaa" stroke-width="0.8"/></svg>
<div class="t" style="left:105px;top:668px;font-size:13px;line-height:20px;color:#999;font-weight:normal;">Fastened 1</div>
<svg style="left:63px;top:697px" width="10" height="12" viewBox="0 0 10 12"><path d="M2.5,1.5 L7,6 L2.5,10.5" fill="none" stroke="#555" stroke-width="1.8"/></svg>
<svg style="left:86px;top:694px" width="14" height="18" viewBox="0 0 14 18"><path d="M1,4.5 V13 C1,16.5 12,16.5 12,13 V4.5" fill="#ddd" stroke="#bbb" stroke-width="1"/><ellipse cx="6.5" cy="4.5" rx="5.5" ry="2.8" fill="#fff" stroke="#bbb"/><path d="M3,9 V12 C3,14 10,14 10,12 V9 C10,11 3,11 3,9" fill="#f2f2f2"/></svg>
<div class="t" style="left:105px;top:694px;font-size:13px;line-height:20px;color:#999;font-weight:normal;">Fastened 2</div>
<svg style="left:63px;top:723px" width="10" height="12" viewBox="0 0 10 12"><path d="M2.5,1.5 L7,6 L2.5,10.5" fill="none" stroke="#555" stroke-width="1.8"/></svg>
<svg style="left:86px;top:720px" width="14" height="18" viewBox="0 0 14 18"><path d="M1,4.5 V13 C1,16.5 12,16.5 12,13 V4.5" fill="#ddd" stroke="#bbb" stroke-width="1"/><ellipse cx="6.5" cy="4.5" rx="5.5" ry="2.8" fill="#fff" stroke="#bbb"/><path d="M3,9 V12 C3,14 10,14 10,12 V9 C10,11 3,11 3,9" fill="#f2f2f2"/></svg>
<div class="t" style="left:105px;top:720px;font-size:13px;line-height:20px;color:#999;font-weight:normal;">Fastened 3</div>
<svg style="left:63px;top:749px" width="10" height="12" viewBox="0 0 10 12"><path d="M2.5,1.5 L7,6 L2.5,10.5" fill="none" stroke="#555" stroke-width="1.8"/></svg>
<svg style="left:86px;top:746px" width="14" height="18" viewBox="0 0 14 18"><path d="M1,4.5 V13 C1,16.5 12,16.5 12,13 V4.5" fill="#ddd" stroke="#bbb" stroke-width="1"/><ellipse cx="6.5" cy="4.5" rx="5.5" ry="2.8" fill="#fff" stroke="#bbb"/><path d="M3,9 V12 C3,14 10,14 10,12 V9 C10,11 3,11 3,9" fill="#f2f2f2"/></svg>
<div class="t" style="left:105px;top:746px;font-size:13px;line-height:20px;color:#999;font-weight:normal;">Fastened 4</div>
<svg style="left:63px;top:775px" width="10" height="12" viewBox="0 0 10 12"><path d="M2.5,1.5 L7,6 L2.5,10.5" fill="none" stroke="#555" stroke-width="1.8"/></svg>
<svg style="left:86px;top:772px" width="14" height="18" viewBox="0 0 14 18"><path d="M1,4.5 V13 C1,16.5 12,16.5 12,13 V4.5" fill="#ddd" stroke="#bbb" stroke-width="1"/><ellipse cx="6.5" cy="4.5" rx="5.5" ry="2.8" fill="#fff" stroke="#bbb"/><path d="M3,9 V12 C3,14 10,14 10,12 V9 C10,11 3,11 3,9" fill="#f2f2f2"/></svg>
<div class="t" style="left:105px;top:772px;font-size:13px;line-height:20px;color:#999;font-weight:normal;">Fastened 5</div>
<svg style="left:63px;top:801px" width="10" height="12" viewBox="0 0 10 12"><path d="M2.5,1.5 L7,6 L2.5,10.5" fill="none" stroke="#555" stroke-width="1.8"/></svg>
<svg style="left:86px;top:798px" width="14" height="18" viewBox="0 0 14 18"><path d="M1,4.5 V13 C1,16.5 12,16.5 12,13 V4.5" fill="#ddd" stroke="#bbb" stroke-width="1"/><ellipse cx="6.5" cy="4.5" rx="5.5" ry="2.8" fill="#fff" stroke="#bbb"/><path d="M3,9 V12 C3,14 10,14 10,12 V9 C10,11 3,11 3,9" fill="#f2f2f2"/></svg>
<div class="t" style="left:105px;top:798px;font-size:13px;line-height:20px;color:#999;font-weight:normal;">Fastened 6</div><svg style="left:1020px;top:80px" width="180" height="180" viewBox="0 0 180 180">
<g fill="#999">
<path d="M84,21 L91.5,11 L99,21Z"/><path d="M84,151 L98,151 L91,161Z"/>
<path d="M15,86 L26,79 L26,93Z"/><path d="M155,79 L155,93 L165,86Z"/>
</g>
<path d="M70,23 C58,27 47,34 40,41" stroke="#999" stroke-width="5.5" fill="none"/>
<path d="M33,45 L45,33 L48,45Z" fill="#999"/>
<path d="M112,23 C124,27 135,34 142,41" stroke="#999" stroke-width="5.5" fill="none"/>
<path d="M149,45 L137,33 L134,45Z" fill="#999"/>
<g opacity="0.95">
<path d="M90,44 L120,52 L128,66 L128,100 L110,122 L80,124 L56,110 L54,70 L62,55Z" fill="#dde0e2"/>
<path d="M62,56 L90,46 L118,54 L92,70Z" fill="#f7f8f8"/>
<path d="M58,74 L88,78 L89,118 L60,108Z" fill="#fafafa"/>
<path d="M95,79 L124,66 L124,98 L96,117Z" fill="#f7f8f8"/>
<ellipse cx="100" cy="78" rx="7" ry="5" fill="#e9ebec"/>
</g>
<text x="79" y="60" transform="rotate(18 85 58)" font-family="Liberation Sans" font-style="italic" font-size="9" fill="#333">Top</text>
<text x="63" y="98" transform="rotate(8 75 96)" font-family="Liberation Sans" font-size="11" fill="#222">Front</text>
<text x="104" y="100" transform="rotate(-55 110 92)" font-family="Liberation Sans" font-style="italic" font-size="9" fill="#333">Right</text>
<path d="M49,117.5 V67" stroke="#2222cc" stroke-width="1.3"/>
<path d="M49,117.5 L100,132.5" stroke="#dd2222" stroke-width="1.3"/>
<path d="M49,117.5 L78,92.5" stroke="#44bb44" stroke-width="1"/>
<text x="44" y="63" font-family="Liberation Sans" font-weight="bold" font-size="12" fill="#2222cc">Z</text>
<text x="104" y="139" font-family="Liberation Sans" font-weight="bold" font-size="12" fill="#dd2222">X</text>
<path d="M128,145.5 L136,143 L145,146 V156 L137,160 L128,157Z" fill="#ddd" stroke="#333" stroke-width="1"/>
<path d="M128,145.5 L137,148.5 L145,146 M137,148.5 V160" stroke="#333" stroke-width="1" fill="none"/>
<path d="M128,145.5 L137,148.5 V160 L128,157Z" fill="#aaa" stroke="#333" stroke-width="1"/>
<path d="M153,150 H161 L157,154Z" fill="#222"/>
</svg>
<div class="a" style="left:1169px;top:367px;width:33px;height:34px;background:#ececec;border:1px solid #d4d4d4"></div>
<svg style="left:1169px;top:367px" width="33" height="33" viewBox="0 0 33 33"><rect x="8" y="8" width="17" height="17" rx="3" fill="#fff" stroke="#222" stroke-width="1.4"/><path d="M11.5,12 H21.5 M13,15 H21.5 M13,18 H21.5 M13,21 H21.5" stroke="#222" stroke-width="1.3"/></svg>
<div class="a" style="left:1169px;top:400px;width:33px;height:34px;background:#ececec;border:1px solid #d4d4d4"></div>
<svg style="left:1169px;top:400px" width="33" height="33" viewBox="0 0 33 33"><rect x="6" y="7" width="9" height="8" fill="#2a5fc0"/><path d="M6,9.7 H15 M6,12.3 H15 M9,7 V15 M12,7 V15" stroke="#fff" stroke-width="0.6"/><path d="M13,13 L19,10 L26,13 V22 L19,25 L13,22Z M13,13 L19,16 L26,13 M19,16 V25" fill="#fff" stroke="#222" stroke-width="1.2"/></svg>
<div class="a" style="left:1169px;top:433px;width:33px;height:34px;background:#ececec;border:1px solid #d4d4d4"></div>
<svg style="left:1169px;top:433px" width="33" height="33" viewBox="0 0 33 33"><rect x="7" y="8" width="4" height="4" fill="#bbb" stroke="#555" stroke-width="0.8"/><path d="M10,13 V15 H15" stroke="#2a5fc0" stroke-width="1.2" stroke-dasharray="1.5 1" fill="none"/><path d="M14,17 H19 V12 H24 V25 H14Z M19,17 L17,15" fill="#fff" stroke="#333" stroke-width="1"/></svg>
<div class="a" style="left:1169px;top:466px;width:33px;height:34px;background:#ececec;border:1px solid #d4d4d4"></div>
<svg style="left:1169px;top:466px" width="33" height="33" viewBox="0 0 33 33"><rect x="15" y="8" width="8" height="15" fill="none" stroke="#2a5fc0" stroke-width="1.2" stroke-dasharray="2 1.2"/><rect x="7" y="18" width="17" height="7" fill="#fff" stroke="#222" stroke-width="1.2"/><circle cx="20" cy="21.5" r="2.5" fill="#fff" stroke="#222" stroke-width="1"/></svg>
<div class="a" style="left:1169px;top:499px;width:33px;height:34px;background:#ececec;border:1px solid #d4d4d4"></div>
<svg style="left:1169px;top:499px" width="33" height="33" viewBox="0 0 33 33"><path d="M16.5,6 L25,11 L25,21 L16.5,26 L8,21 L8,11Z" fill="#a9d2f0"/><path d="M16.5,16 L8,11 V21Z M16.5,16 V26 L8,21Z" fill="#1f5fbf"/><path d="M16.5,16 L25,21 L16.5,26Z" fill="#999"/><path d="M16.5,16 L25,11 V21Z" fill="#c8c8c8"/><path d="M16.5,6 L25,11 L16.5,16 L8,11Z" fill="#8cc4ec"/></svg>
<div class="a" style="left:1169px;top:532px;width:33px;height:34px;background:#ececec;border:1px solid #d4d4d4"></div>
<svg style="left:1169px;top:532px" width="33" height="33" viewBox="0 0 33 33"><rect x="7.5" y="6" width="9" height="8" fill="none" stroke="#222" stroke-width="1.1"/><path d="M7.5,8.7 H16.5 M7.5,11.3 H16.5 M10.5,6 V14 M13.5,6 V14" stroke="#222" stroke-width="0.9"/><path d="M8.5,14 C5.5,17 5.5,22 8.5,26 M22.5,14 C25.5,17 25.5,22 22.5,26" stroke="#222" stroke-width="1.6" fill="none"/><path d="M11,16 C14,16 15,24 19,24 M19.5,16 C17,17 14,22 11,24" stroke="#222" stroke-width="1.8" fill="none"/></svg>
<div class="a" style="left:1169px;top:576px;width:33px;height:34px;background:#ececec;border:1px solid #d4d4d4"></div>
<svg style="left:1169px;top:576px" width="33" height="33" viewBox="0 0 33 33"><rect x="7" y="7" width="20" height="19" fill="#1f55b5" stroke="#0e2f70" stroke-width="1"/><text x="9" y="22" font-family="Liberation Serif" font-weight="bold" font-size="13" fill="#fff" textLength="16" lengthAdjust="spacingAndGlyphs">MK</text></svg>
<div class="a" style="left:1169px;top:609px;width:33px;height:34px;background:#ececec;border:1px solid #d4d4d4"></div>
<svg style="left:1169px;top:609px" width="33" height="33" viewBox="0 0 33 33"><rect x="6" y="6" width="21" height="21" rx="4" fill="#e2e2e2"/><path d="M16.5,16 C13,9 7,7 7,11 C7,14 10,17 13,18 C10,19 9,24 12,24 C14,24 16,21 16.5,19 C17,21 19,24 21,24 C24,24 23,19 20,18 C23,17 26,14 26,11 C26,7 20,9 16.5,16Z" fill="#000"/></svg>
<div class="a" style="left:1169px;top:642px;width:33px;height:34px;background:#ececec;border:1px solid #d4d4d4"></div>
<svg style="left:1169px;top:642px" width="33" height="33" viewBox="0 0 33 33"><rect x="6" y="6" width="21" height="21" rx="4" fill="#e2e2e2"/><rect x="7" y="12" width="19" height="13" rx="2" fill="#333" transform="rotate(-8 16 18)"/><circle cx="13" cy="18" r="3" fill="#6ab0f0"/><circle cx="20" cy="17" r="3" fill="#6ab0f0"/><path d="M12,8 H21" stroke="#3a6fc0" stroke-width="2"/><path d="M13,22 Q17,24 21,21" stroke="#fff" stroke-width="1" fill="none"/></svg>
<div class="a" style="left:1169px;top:675px;width:33px;height:34px;background:#ececec;border:1px solid #d4d4d4"></div>
<svg style="left:1169px;top:675px" width="33" height="33" viewBox="0 0 33 33"><rect x="7" y="7" width="20" height="20" fill="#4caf50"/><path d="M10,11 H16 V23 Q13,21.5 10,23Z M17.5,11 H24 V23 Q21,21.5 17.5,23Z" fill="#fff"/></svg>
<div class="a" style="left:1169px;top:708px;width:33px;height:34px;background:#fff;border:1px solid #d4d4d4"></div>
<svg style="left:1169px;top:708px" width="33" height="33" viewBox="0 0 33 33"><rect x="7" y="7" width="20" height="20" fill="#1a4fa8" stroke="#0d2c66" stroke-width="1"/><path d="M10,11 H16 V23 Q13,21.5 10,23Z M17.5,11 H24 V23 Q21,21.5 17.5,23Z" fill="#fff"/></svg>
<svg style="left:780px;top:860px" width="160" height="170" viewBox="0 0 160 170">
<path d="M62.5,15 L142.1,37.8 L142.1,116.6 L96.4,156.8 L16.8,134 L16.8,54.4Z" fill="#bdbdbd"/>
<path d="M16.8,54.4 L62.5,15 L62.5,94.6 L16.8,134Z" fill="#b4b4b4"/>
<path d="M62.5,94.6 L142.1,116.6 L96.4,156.8 L16.8,134Z" fill="#b8b8b8"/>
<g stroke="#222" stroke-width="1.3" fill="none" stroke-linejoin="round">
<path d="M62.5,15 L142.1,37.8 L95.6,76.5 L16.8,54.4Z"/>
<path d="M16.8,54.4 V134 L96.4,156.8 V76.5 M142.1,37.8 V116.6 L96.4,156.8"/>
<path d="M62.5,15 V94.6 L16.8,134 M62.5,94.6 L142.1,116.6"/>
</g>
<circle cx="79" cy="45.7" r="4.2" fill="#fff" stroke="#222" stroke-width="1.3"/><circle cx="79" cy="45.7" r="1.6" fill="#222"/>
</svg>
<svg style="left:1090px;top:1020px" width="110" height="30" viewBox="0 0 110 30">
<path d="M13.5,16.8 H25 C27.5,16.8 28.7,15 28.7,13 C28.7,10.5 26.5,9.8 23.5,9.8 C20.5,9.8 18.5,10.8 18.5,13 V16.8" fill="none" stroke="#222" stroke-width="1.3"/>
<ellipse cx="23.5" cy="12.8" rx="3.2" ry="1.8" fill="none" stroke="#222" stroke-width="1.2"/>
<path d="M13.5,16.8 V21.8 H26 C28,21.8 28.7,20 28.7,18 V13" fill="#f0f0f0" stroke="#222" stroke-width="1.3"/>
<path d="M16,21 V19.8 M19,21 V19.8 M22,21 V19.8 M25,21 V19.8" stroke="#333" stroke-width="1"/>
<path d="M46.5,22.3 A9.7,12 0 0 1 65.8,22.3 Z" fill="#c8c8c8" stroke="#222" stroke-width="1.3"/>
<path d="M50.5,19.5 A5.7,6.5 0 0 1 61.8,19.5 L59,18 C57,17.5 55.5,17.5 53.5,18Z" fill="#fff" stroke="#444" stroke-width="1.2"/>
<path d="M86.2,9.2 H96" stroke="#222" stroke-width="1.3"/>
<path d="M86.2,9.2 L84.8,18 M96,9.2 L97.4,18" stroke="#222" stroke-width="1"/>
<rect x="84.2" y="17.2" width="4.3" height="1.6" fill="#222"/><rect x="93.2" y="17.2" width="4.6" height="1.6" fill="#222"/>
<path d="M91,9.5 V20.5" stroke="#999" stroke-width="1.2"/>
<rect x="84.2" y="21.2" width="13.6" height="1.6" fill="#222"/>
</svg><svg style="left:0;top:0" width="1919" height="1079" viewBox="0 0 1919 1079">
<defs>
<linearGradient id="cylg" x1="0" x2="1" y1="0" y2="0">
 <stop offset="0" stop-color="#c98a24"/><stop offset="0.12" stop-color="#e2a433"/><stop offset="0.45" stop-color="#efb441"/><stop offset="0.8" stop-color="#e6a839"/><stop offset="1" stop-color="#c98b26"/>
</linearGradient>
<linearGradient id="capg" x1="0" x2="0.1" y1="0" y2="1">
 <stop offset="0" stop-color="#a98642"/><stop offset="0.6" stop-color="#bd9448"/><stop offset="0.62" stop-color="#d9a646"/><stop offset="1" stop-color="#e3ad48"/>
</linearGradient>
<linearGradient id="plateg" x1="0" x2="1" y1="0" y2="0">
 <stop offset="0" stop-color="#3b3e42"/><stop offset="1" stop-color="#4a4d52"/>
</linearGradient>
<linearGradient id="tubeg" x1="0" x2="1">
 <stop offset="0" stop-color="#b9b9b9"/><stop offset="1" stop-color="#d8d8d8"/>
</linearGradient>
<pattern id="teeth" width="5" height="20" patternUnits="userSpaceOnUse"><rect width="5" height="20" fill="#cf9c3e"/><rect x="0" width="1.4" height="20" fill="#9c7224"/></pattern>
</defs>
<path d="M518.75,279 V260 C518.75,252 528,248 542.5,246.25 L697.5,214.4 C725,210 741,222 741,233.75 V246.25 C741,254 732,259 716,263.75 L595,291.25 L560,291 Z" fill="#252525"/>
<path d="M518.75,262 C520,272 535,279 557.5,279 L716,247 C732,243 741,240 741,233.75 V246.25 C741,254 732,259 716,263.75 L595,291.25 L540,291 C525,288 518.75,284 518.75,279Z" fill="#2b2b2b"/>
<path d="M530,270 C528,264 535,263 543.75,262.5 L695,231.9 C715,229 730,234 730,239.4 C728,243 722,245 716,246.25 L557.5,277.5 C545,279 533,276 530,270 Z" fill="#fff"/>
<path d="M543,250 V263 M693,218 V232 M717,247 V263 M556,278 V290" stroke="#1a1a1a" stroke-width="0.8"/>
<path d="M391.5,278.5 H563.4 C582,278.5 595.4,286 595.4,296 V313 C595.4,322 582,328.6 560.8,328.6 H391.5 C372,328.6 360.2,322 360.2,313 V296 C360.2,286 372,278.5 391.5,278.5Z" fill="#252525"/>
<path d="M360.2,296 C360.2,308 372,313.5 391.5,313.5 H563.4 C582,313.5 595.4,308 595.4,296 V313 C595.4,322 582,328.6 560.8,328.6 H391.5 C372,328.6 360.2,322 360.2,313Z" fill="#2b2b2b"/>
<path d="M394,296 H562 C578,296 584.3,300 584.3,304 C584.3,308 578,312.3 562,312.3 H394 C378,312.3 372,308 372,304 C372,300 378,296 394,296Z" fill="#fff"/>
<path d="M397,280 V296 M559,280 V296 M397,313 V328 M559,313 V328" stroke="#1a1a1a" stroke-width="0.8"/>
<path d="M442,383 L620,315 L810,303 L847,313 L849,323 L811,352 L677,394 L500,404 L455,398Z" fill="#43464b" stroke="#2a2c2f" stroke-width="1.2"/>
<path d="M449,387 L622,320 L808,309 L845,318 M622,320 L620,315" stroke="#2a2c2f" stroke-width="1" fill="none"/>
<path d="M636,357 L800,330 M636,368 L790,345 M640,372 L770,360" stroke="#2a2c2f" stroke-width="1" fill="none"/>
<path d="M455,398 L500,396.4 L677,392 L677,401 L583.5,407 L499.7,406.3 L455,404Z" fill="#2c2e31"/>
<path d="M597,347 H636 V398 H677 V500 Q677,514 660,514 H597Z" fill="#2e3033"/>
<path d="M636,398 V514 M624,360 V514" stroke="#222" stroke-width="0.8"/>
<ellipse cx="616" cy="349" rx="19" ry="13" fill="#3a403c" stroke="#222" stroke-width="1"/>
<ellipse cx="630" cy="347" rx="33" ry="16" fill="#343a37" stroke="#1e1e1e" stroke-width="0.8"/>
<rect x="617" y="326" width="40" height="36" fill="#161616"/><path d="M621,330 V362 M626,330 V364 M631,330 V365 M636,330 V365 M641,330 V364 M646,330 V363 M651,330 V361" stroke="#2a2a2a" stroke-width="1.2"/>
<ellipse cx="637" cy="362" rx="20" ry="4" fill="#161616"/>
<ellipse cx="637" cy="326" rx="21" ry="10" fill="#1c1c1c" stroke="#0c0c0c" stroke-width="0.8"/><ellipse cx="637" cy="325" rx="14" ry="6.5" fill="none" stroke="#3a3a3a" stroke-width="0.8"/><ellipse cx="637" cy="325" rx="6" ry="3" fill="none" stroke="#555" stroke-width="0.8"/>
<ellipse cx="607" cy="338" rx="3.5" ry="2.2" fill="none" stroke="#1a1a1a" stroke-width="1"/><ellipse cx="627" cy="358" rx="3.5" ry="2.2" fill="none" stroke="#1a1a1a" stroke-width="1"/>
<path d="M786,322 L810,306 L847,314 L848,323 L826,339 L786,330Z" fill="#34373a" stroke="#202224" stroke-width="1"/>
<path d="M800,322 L815,312 L838,318 L823,330Z" fill="#2a2c2f" stroke="#555" stroke-width="0.6"/>
<path d="M826,339 L848,323 V610 L826,626Z" fill="url(#tubeg)"/>
<path d="M811,352 L826,339 V626 L811,636Z" fill="#4a4c50"/>
<path d="M826,339 V626 M848,323 V610" stroke="#555" stroke-width="0.8"/>
<ellipse cx="838" cy="353.0" rx="2.6" ry="4.3" fill="#333" stroke="#111" stroke-width="0.8" transform="rotate(12 838 353.0)"/><ellipse cx="838.6" cy="353.0" rx="1.2" ry="2.8" fill="#888" transform="rotate(12 838 353.0)"/>
<ellipse cx="838" cy="372.8" rx="2.6" ry="4.3" fill="#333" stroke="#111" stroke-width="0.8" transform="rotate(12 838 372.8)"/><ellipse cx="838.6" cy="372.8" rx="1.2" ry="2.8" fill="#888" transform="rotate(12 838 372.8)"/>
<ellipse cx="838" cy="392.6" rx="2.6" ry="4.3" fill="#333" stroke="#111" stroke-width="0.8" transform="rotate(12 838 392.6)"/><ellipse cx="838.6" cy="392.6" rx="1.2" ry="2.8" fill="#888" transform="rotate(12 838 392.6)"/>
<ellipse cx="838" cy="412.4" rx="2.6" ry="4.3" fill="#333" stroke="#111" stroke-width="0.8" transform="rotate(12 838 412.4)"/><ellipse cx="838.6" cy="412.4" rx="1.2" ry="2.8" fill="#888" transform="rotate(12 838 412.4)"/>
<ellipse cx="838" cy="432.2" rx="2.6" ry="4.3" fill="#333" stroke="#111" stroke-width="0.8" transform="rotate(12 838 432.2)"/><ellipse cx="838.6" cy="432.2" rx="1.2" ry="2.8" fill="#888" transform="rotate(12 838 432.2)"/>
<ellipse cx="838" cy="452.0" rx="2.6" ry="4.3" fill="#333" stroke="#111" stroke-width="0.8" transform="rotate(12 838 452.0)"/><ellipse cx="838.6" cy="452.0" rx="1.2" ry="2.8" fill="#888" transform="rotate(12 838 452.0)"/>
<ellipse cx="838" cy="471.8" rx="2.6" ry="4.3" fill="#333" stroke="#111" stroke-width="0.8" transform="rotate(12 838 471.8)"/><ellipse cx="838.6" cy="471.8" rx="1.2" ry="2.8" fill="#888" transform="rotate(12 838 471.8)"/>
<ellipse cx="838" cy="491.6" rx="2.6" ry="4.3" fill="#333" stroke="#111" stroke-width="0.8" transform="rotate(12 838 491.6)"/><ellipse cx="838.6" cy="491.6" rx="1.2" ry="2.8" fill="#888" transform="rotate(12 838 491.6)"/>
<ellipse cx="838" cy="511.4" rx="2.6" ry="4.3" fill="#333" stroke="#111" stroke-width="0.8" transform="rotate(12 838 511.4)"/><ellipse cx="838.6" cy="511.4" rx="1.2" ry="2.8" fill="#888" transform="rotate(12 838 511.4)"/>
<ellipse cx="838" cy="531.2" rx="2.6" ry="4.3" fill="#333" stroke="#111" stroke-width="0.8" transform="rotate(12 838 531.2)"/><ellipse cx="838.6" cy="531.2" rx="1.2" ry="2.8" fill="#888" transform="rotate(12 838 531.2)"/>
<ellipse cx="838" cy="551.0" rx="2.6" ry="4.3" fill="#333" stroke="#111" stroke-width="0.8" transform="rotate(12 838 551.0)"/><ellipse cx="838.6" cy="551.0" rx="1.2" ry="2.8" fill="#888" transform="rotate(12 838 551.0)"/>
<ellipse cx="838" cy="570.8" rx="2.6" ry="4.3" fill="#333" stroke="#111" stroke-width="0.8" transform="rotate(12 838 570.8)"/><ellipse cx="838.6" cy="570.8" rx="1.2" ry="2.8" fill="#888" transform="rotate(12 838 570.8)"/>
<ellipse cx="838" cy="590.6" rx="2.6" ry="4.3" fill="#333" stroke="#111" stroke-width="0.8" transform="rotate(12 838 590.6)"/><ellipse cx="838.6" cy="590.6" rx="1.2" ry="2.8" fill="#888" transform="rotate(12 838 590.6)"/>
<ellipse cx="838" cy="610.4" rx="2.6" ry="4.3" fill="#333" stroke="#111" stroke-width="0.8" transform="rotate(12 838 610.4)"/><ellipse cx="838.6" cy="610.4" rx="1.2" ry="2.8" fill="#888" transform="rotate(12 838 610.4)"/>
<path d="M448,692 L500,658 L726,609 L827,603 L848,606 L846,613 L791,665 L630,697 Z" fill="#4a4d52" stroke="#2a2c2f" stroke-width="1"/>
<path d="M448,692 L630,697 L791,665 L846,613 L846,618 L792,670 L630,702 L450,697Z" fill="#2f3134"/>
<path d="M630,697 V702 M791,665 V670" stroke="#222" stroke-width="1"/>
<g transform="translate(312,-29)">
<path d="M413,432 Q413,418 424,414 L421,399 A39,15 0 0 1 499,399 L497,414 Q508,418 508,432 V650 Q508,660 499,664 V675 A38,14 0 0 1 422,675 V664 Q413,660 413,650Z" fill="#f3ae3a"/>
<path d="M415,433 Q415,421 425,418 H495 Q506,421 506,433 V649 Q506,658 497,661 H425 Q415,658 415,649Z" fill="url(#cylg)"/>
<path d="M416,436 V648 M505,436 V648" stroke="#8a5d18" stroke-width="0.7"/>
<path d="M418,430 Q460,448 503,430" stroke="#9a6b20" stroke-width="0.8" fill="none"/>
<path d="M416,465 Q460,505 505,465" stroke="#9a6b20" stroke-width="0.9" fill="none"/>
<path d="M425,412 V432 Q460,446 495,432 V412Z" fill="url(#teeth)"/>
<path d="M425,432 Q460,446 495,432" stroke="#9a6b20" stroke-width="0.8" fill="none"/>
<rect x="448" y="485" width="24" height="115" fill="#d99e35"/><path d="M448,485 V600 M472,485 V600 M456,485 V600 M464,485 V600" stroke="#a7761f" stroke-width="0.8"/>
<path d="M416,606 H505 V650 Q460,668 416,650Z" fill="#e6a73a"/>
<ellipse cx="460" cy="606" rx="43" ry="20" fill="#e8ab3e" stroke="#9a6b20" stroke-width="0.8"/>
<ellipse cx="460" cy="602" rx="12" ry="5" fill="#d39c3a" stroke="#9a6b20" stroke-width="0.7"/>
<path d="M428,598 L436,592 L439,596 L431,602Z M480,616 L488,610 L491,614 L483,620Z" fill="#d9a240" stroke="#8a5d18" stroke-width="0.8"/>
<path d="M505,450 A5,6 0 0 1 505,462" stroke="#9a6b20" fill="#eab24a" stroke-width="0.8"/><path d="M504,629 A5,6 0 0 1 504,641" stroke="#9a6b20" fill="#eab24a" stroke-width="0.8"/>
<path d="M423,662 V676 Q460,692 497,676 V662 Q460,672 423,662Z" fill="url(#teeth)"/>
<ellipse cx="460" cy="399" rx="38" ry="14" fill="url(#capg)" stroke="#9a6b20" stroke-width="0.8"/>
<ellipse cx="460" cy="398" rx="26" ry="9" fill="none" stroke="#a57420" stroke-width="0.7"/><ellipse cx="460" cy="397" rx="15" ry="5.5" fill="none" stroke="#a57420" stroke-width="0.7"/><ellipse cx="460" cy="397" rx="6" ry="2.5" fill="none" stroke="#a57420" stroke-width="0.7"/>
<path d="M415,420 Q415,410 425,405 Q460,392 495,405 Q506,410 506,420 V432 Q460,448 415,432Z" fill="#1f1f1f"/>
<ellipse cx="460" cy="399" rx="39" ry="15" fill="url(#capg)" stroke="#9a6b20" stroke-width="0.8"/><ellipse cx="460" cy="398" rx="26" ry="9" fill="none" stroke="#a57420" stroke-width="0.7"/><ellipse cx="460" cy="397" rx="15" ry="5.5" fill="none" stroke="#a57420" stroke-width="0.7"/>
</g>
<ellipse cx="807" cy="457.0" rx="3" ry="4.5" fill="#c28a2a" stroke="#6a4810" stroke-width="1"/>
<ellipse cx="807" cy="476.5" rx="3" ry="4.5" fill="#c28a2a" stroke="#6a4810" stroke-width="1"/>
<ellipse cx="807" cy="496.0" rx="3" ry="4.5" fill="#c28a2a" stroke="#6a4810" stroke-width="1"/>
<ellipse cx="807" cy="515.5" rx="3" ry="4.5" fill="#c28a2a" stroke="#6a4810" stroke-width="1"/>
<ellipse cx="807" cy="535.0" rx="3" ry="4.5" fill="#c28a2a" stroke="#6a4810" stroke-width="1"/>
<ellipse cx="807" cy="554.5" rx="3" ry="4.5" fill="#c28a2a" stroke="#6a4810" stroke-width="1"/>
<g transform="translate(162,2)">
<path d="M413,432 Q413,418 424,414 L421,399 A39,15 0 0 1 499,399 L497,414 Q508,418 508,432 V650 Q508,660 499,664 V675 A38,14 0 0 1 422,675 V664 Q413,660 413,650Z" fill="#f3ae3a"/>
<path d="M415,433 Q415,421 425,418 H495 Q506,421 506,433 V649 Q506,658 497,661 H425 Q415,658 415,649Z" fill="url(#cylg)"/>
<path d="M416,436 V648 M505,436 V648" stroke="#8a5d18" stroke-width="0.7"/>
<path d="M418,430 Q460,448 503,430" stroke="#9a6b20" stroke-width="0.8" fill="none"/>
<path d="M416,465 Q460,505 505,465" stroke="#9a6b20" stroke-width="0.9" fill="none"/>
<path d="M425,412 V432 Q460,446 495,432 V412Z" fill="url(#teeth)"/>
<path d="M425,432 Q460,446 495,432" stroke="#9a6b20" stroke-width="0.8" fill="none"/>
<rect x="448" y="485" width="24" height="115" fill="#d99e35"/><path d="M448,485 V600 M472,485 V600 M456,485 V600 M464,485 V600" stroke="#a7761f" stroke-width="0.8"/>
<path d="M416,606 H505 V650 Q460,668 416,650Z" fill="#e6a73a"/>
<ellipse cx="460" cy="606" rx="43" ry="20" fill="#e8ab3e" stroke="#9a6b20" stroke-width="0.8"/>
<ellipse cx="460" cy="602" rx="12" ry="5" fill="#d39c3a" stroke="#9a6b20" stroke-width="0.7"/>
<path d="M428,598 L436,592 L439,596 L431,602Z M480,616 L488,610 L491,614 L483,620Z" fill="#d9a240" stroke="#8a5d18" stroke-width="0.8"/>
<path d="M505,450 A5,6 0 0 1 505,462" stroke="#9a6b20" fill="#eab24a" stroke-width="0.8"/><path d="M504,629 A5,6 0 0 1 504,641" stroke="#9a6b20" fill="#eab24a" stroke-width="0.8"/>
<path d="M423,662 V676 Q460,692 497,676 V662 Q460,672 423,662Z" fill="url(#teeth)"/>
<ellipse cx="460" cy="399" rx="38" ry="14" fill="url(#capg)" stroke="#9a6b20" stroke-width="0.8"/>
<ellipse cx="460" cy="398" rx="26" ry="9" fill="none" stroke="#a57420" stroke-width="0.7"/><ellipse cx="460" cy="397" rx="15" ry="5.5" fill="none" stroke="#a57420" stroke-width="0.7"/><ellipse cx="460" cy="397" rx="6" ry="2.5" fill="none" stroke="#a57420" stroke-width="0.7"/>
</g>
<g transform="translate(0,0)">
<path d="M413,432 Q413,418 424,414 L421,399 A39,15 0 0 1 499,399 L497,414 Q508,418 508,432 V650 Q508,660 499,664 V675 A38,14 0 0 1 422,675 V664 Q413,660 413,650Z" fill="#f3ae3a"/>
<path d="M415,433 Q415,421 425,418 H495 Q506,421 506,433 V649 Q506,658 497,661 H425 Q415,658 415,649Z" fill="url(#cylg)"/>
<path d="M416,436 V648 M505,436 V648" stroke="#8a5d18" stroke-width="0.7"/>
<path d="M418,430 Q460,448 503,430" stroke="#9a6b20" stroke-width="0.8" fill="none"/>
<path d="M416,465 Q460,505 505,465" stroke="#9a6b20" stroke-width="0.9" fill="none"/>
<path d="M425,412 V432 Q460,446 495,432 V412Z" fill="url(#teeth)"/>
<path d="M425,432 Q460,446 495,432" stroke="#9a6b20" stroke-width="0.8" fill="none"/>
<rect x="448" y="485" width="24" height="115" fill="#d99e35"/><path d="M448,485 V600 M472,485 V600 M456,485 V600 M464,485 V600" stroke="#a7761f" stroke-width="0.8"/>
<path d="M416,606 H505 V650 Q460,668 416,650Z" fill="#e6a73a"/>
<ellipse cx="460" cy="606" rx="43" ry="20" fill="#e8ab3e" stroke="#9a6b20" stroke-width="0.8"/>
<ellipse cx="460" cy="602" rx="12" ry="5" fill="#d39c3a" stroke="#9a6b20" stroke-width="0.7"/>
<path d="M428,598 L436,592 L439,596 L431,602Z M480,616 L488,610 L491,614 L483,620Z" fill="#d9a240" stroke="#8a5d18" stroke-width="0.8"/>
<path d="M505,450 A5,6 0 0 1 505,462" stroke="#9a6b20" fill="#eab24a" stroke-width="0.8"/><path d="M504,629 A5,6 0 0 1 504,641" stroke="#9a6b20" fill="#eab24a" stroke-width="0.8"/>
<path d="M423,662 V676 Q460,692 497,676 V662 Q460,672 423,662Z" fill="url(#teeth)"/>
<ellipse cx="460" cy="399" rx="38" ry="14" fill="url(#capg)" stroke="#9a6b20" stroke-width="0.8"/>
<ellipse cx="460" cy="398" rx="26" ry="9" fill="none" stroke="#a57420" stroke-width="0.7"/><ellipse cx="460" cy="397" rx="15" ry="5.5" fill="none" stroke="#a57420" stroke-width="0.7"/><ellipse cx="460" cy="397" rx="6" ry="2.5" fill="none" stroke="#a57420" stroke-width="0.7"/>
</g>
<ellipse cx="460" cy="399" rx="15" ry="7" fill="#e8e8e8" stroke="#3a5a8a" stroke-width="1.2"/><ellipse cx="460" cy="399" rx="11" ry="5" fill="none" stroke="#333" stroke-width="1"/><path d="M452,401 Q458,394 468,398" stroke="#333" stroke-width="1.5" fill="none"/>
<path d="M460,381 V416" stroke="#6ec3e8" stroke-width="2"/>
<ellipse cx="460" cy="677" rx="16" ry="8" fill="none" stroke="#333" stroke-width="1.8"/><ellipse cx="460" cy="677" rx="13" ry="6" fill="none" stroke="#fff" stroke-width="1.2"/><path d="M460,678 V694" stroke="#6ec3e8" stroke-width="2"/><path d="M456,681 L460,676 L464,681" stroke="#6ec3e8" stroke-width="1.5" fill="none"/>
<path d="M460,535 L507,495 M460,535 V627 M460,535 L553,562 M489,506 L507,495 L500,514Z M450,595 H471 L460.5,620Z M518,545 L544,562 L517,564Z M497,521.6 L522,524 L512,536 L488.7,533Z M478,565 L498,560 L499.5,585 L477,580Z M471,541 L484,535 L483,560 L471,566Z" stroke="#8c8c8c" stroke-width="3.6" fill="none" stroke-linejoin="round"/><path d="M460,535 L507,495 M460,535 V627 M460,535 L553,562 M489,506 L507,495 L500,514Z M450,595 H471 L460.5,620Z M518,545 L544,562 L517,564Z M497,521.6 L522,524 L512,536 L488.7,533Z M478,565 L498,560 L499.5,585 L477,580Z M471,541 L484,535 L483,560 L471,566Z" stroke="#fff" stroke-width="2" fill="none" stroke-linejoin="round"/>
<circle cx="460" cy="535" r="7" stroke="#8c8c8c" stroke-width="3.6" fill="none" stroke-linejoin="round"/><circle cx="460" cy="535" r="7" stroke="#fff" stroke-width="2" fill="none" stroke-linejoin="round"/>
<ellipse cx="513" cy="490" rx="5.5" ry="3.5" stroke="#8c8c8c" stroke-width="3.6" fill="none" stroke-linejoin="round"/><ellipse cx="513" cy="490" rx="5.5" ry="3.5" stroke="#fff" stroke-width="2" fill="none" stroke-linejoin="round"/>
<path d="M494,486 L534,496" stroke="#8c8c8c" stroke-width="3.6" fill="none" stroke-linejoin="round"/><path d="M494,486 L534,496" stroke="#fff" stroke-width="2" fill="none" stroke-linejoin="round"/>
<circle cx="553" cy="562" r="5" stroke="#8c8c8c" stroke-width="3.6" fill="none" stroke-linejoin="round"/><circle cx="553" cy="562" r="5" stroke="#fff" stroke-width="2" fill="none" stroke-linejoin="round"/>
<path d="M552,542 V583" stroke="#8c8c8c" stroke-width="3.6" fill="none" stroke-linejoin="round"/><path d="M552,542 V583" stroke="#fff" stroke-width="2" fill="none" stroke-linejoin="round"/>
<ellipse cx="460" cy="627" rx="3" ry="6" transform="rotate(30 460 627)" stroke="#8c8c8c" stroke-width="3.6" fill="none" stroke-linejoin="round"/><ellipse cx="460" cy="627" rx="3" ry="6" transform="rotate(30 460 627)" stroke="#fff" stroke-width="2" fill="none" stroke-linejoin="round"/>
<path d="M448,638 L471,619" stroke="#8c8c8c" stroke-width="3.6" fill="none" stroke-linejoin="round"/><path d="M448,638 L471,619" stroke="#fff" stroke-width="2" fill="none" stroke-linejoin="round"/>
</svg><div class="a" style="left:1201px;top:77px;width:718px;height:973px;background:#fff;border-left:1px solid #d8d8d8"></div>
<div class="a" style="left:1207px;top:77px;width:712px;height:973px;background:#5a5c60"></div>
<div class="a" style="left:1207px;top:127px;width:712px;height:1px;background:#505256"></div>
<div class="a" style="left:1207px;top:176px;width:712px;height:1px;background:#505256"></div>
<div class="a" style="left:1214px;top:225px;width:705px;height:1px;background:#505256"></div>
<div class="a" style="left:1214px;top:274px;width:705px;height:1px;background:#505256"></div>
<div class="a" style="left:1214px;top:323px;width:705px;height:1px;background:#505256"></div>
<div class="a" style="left:1214px;top:372px;width:705px;height:1px;background:#505256"></div>
<div class="a" style="left:1214px;top:421px;width:705px;height:1px;background:#505256"></div>
<div class="a" style="left:1214px;top:470px;width:705px;height:1px;background:#505256"></div>
<div class="a" style="left:1214px;top:519px;width:705px;height:1px;background:#505256"></div>
<div class="a" style="left:1214px;top:568px;width:705px;height:1px;background:#505256"></div>
<div class="a" style="left:1214px;top:617px;width:705px;height:1px;background:#505256"></div>
<div class="a" style="left:1214px;top:666px;width:705px;height:1px;background:#505256"></div>
<div class="a" style="left:1214px;top:715px;width:705px;height:1px;background:#505256"></div>
<div class="a" style="left:1214px;top:764px;width:705px;height:1px;background:#505256"></div>
<div class="a" style="left:1214px;top:813px;width:705px;height:1px;background:#505256"></div>
<div class="a" style="left:1214px;top:862px;width:705px;height:1px;background:#505256"></div>
<div class="a" style="left:1207px;top:911px;width:712px;height:1px;background:#505256"></div>
<div class="a" style="left:1207px;top:912px;width:712px;height:138px;background:#55585b"></div>
<svg style="left:1222px;top:86px" width="30" height="28" viewBox="0 0 30 28"><rect x="0.5" y="0.5" width="28.5" height="27" rx="3" fill="#254a27"/><path d="M3.5,5.5 H13.8 V21.5 H3.5Z M15.2,5.5 H25.5 V21.5 H15.2Z" fill="#56585b"/><path d="M3.5,21.5 Q8.5,19.5 13.8,21.5 M15.2,21.5 Q20.5,19.5 25.5,21.5" stroke="#254a27" stroke-width="1.5" fill="none"/></svg>
<div class="a" style="left:1262px;top:88px;width:1px;height:26px;background:#4d4f53"></div>
<svg style="left:1278px;top:93px" width="18" height="18" viewBox="0 0 18 18"><path d="M1.5,2 H15.5 L10.5,8.5 V15.5 L6.5,13.5 V8.5Z" fill="#232427"/></svg>
<div class="a" style="left:1305px;top:87px;width:201px;height:30px;border:1px solid #6a6b6f;border-radius:15px"></div>
<svg style="left:1310px;top:92px" width="20" height="20" viewBox="0 0 20 20"><circle cx="9" cy="9" r="6.3" fill="none" stroke="#232427" stroke-width="1.8"/><path d="M13.5,13.5 L17.5,17.5" stroke="#232427" stroke-width="2"/></svg>
<div class="t" style="left:1334px;top:92px;font-size:14.2px;line-height:20px;color:#232427;">roller</div>
<svg style="left:1878px;top:92px" width="20" height="20" viewBox="0 0 20 20"><circle cx="10" cy="10" r="7" fill="none" stroke="#232427" stroke-width="3" stroke-dasharray="2.2 1.47"/><circle cx="10" cy="10" r="5" fill="none" stroke="#232427" stroke-width="2.5"/></svg>
<svg style="left:1224px;top:142px" width="22" height="22" viewBox="0 0 22 22"><circle cx="9.5" cy="9" r="6.5" fill="none" stroke="#1d3559" stroke-width="2"/><path d="M14,13.5 L18.5,18" stroke="#1d3559" stroke-width="2.4"/></svg>
<div class="t" style="left:1253px;top:142.5px;font-size:14.4px;line-height:20px;color:#232427;-webkit-text-stroke:0.3px #232427">Search Re</div>
<svg style="left:1884px;top:145px" width="16" height="12" viewBox="0 0 16 12"><path d="M2,9 L7.5,3.5 L13,9" fill="none" stroke="#232427" stroke-width="1.6"/></svg>
<div class="t" style="left:1292px;top:191px;font-size:14.4px;line-height:20px;color:#232427;">Hor</div>
<svg style="left:1855px;top:192px" width="20" height="18" viewBox="0 0 20 18"><path d="M10,16 C4,11 1.5,8.5 1.5,5.5 C1.5,3 3.5,1.5 5.8,1.5 C7.6,1.5 9,2.6 10,4 C11,2.6 12.4,1.5 14.2,1.5 C16.5,1.5 18.5,3 18.5,5.5 C18.5,8.5 16,11 10,16Z" fill="#303236"/></svg>
<svg style="left:1885px;top:198px" width="20" height="6" viewBox="0 0 20 6"><rect x="2" y="1.3" width="3.4" height="3.4" rx="0.8" fill="#303236"/><rect x="8" y="1.3" width="3.4" height="3.4" rx="0.8" fill="#303236"/><rect x="14" y="1.3" width="3.4" height="3.4" rx="0.8" fill="#303236"/></svg>
<div class="t" style="left:1292px;top:240px;font-size:14.4px;line-height:20px;color:#232427;text-decoration:underline">Roll</div>
<svg style="left:1855px;top:241px" width="20" height="18" viewBox="0 0 20 18"><path d="M10,16 C4,11 1.5,8.5 1.5,5.5 C1.5,3 3.5,1.5 5.8,1.5 C7.6,1.5 9,2.6 10,4 C11,2.6 12.4,1.5 14.2,1.5 C16.5,1.5 18.5,3 18.5,5.5 C18.5,8.5 16,11 10,16Z" fill="#303236"/></svg>
<svg style="left:1885px;top:247px" width="20" height="6" viewBox="0 0 20 6"><rect x="2" y="1.3" width="3.4" height="3.4" rx="0.8" fill="#303236"/><rect x="8" y="1.3" width="3.4" height="3.4" rx="0.8" fill="#303236"/><rect x="14" y="1.3" width="3.4" height="3.4" rx="0.8" fill="#303236"/></svg>
<div class="t" style="left:1292px;top:289px;font-size:14.4px;line-height:20px;color:#232427;">Sus</div>
<svg style="left:1855px;top:290px" width="20" height="18" viewBox="0 0 20 18"><path d="M10,16 C4,11 1.5,8.5 1.5,5.5 C1.5,3 3.5,1.5 5.8,1.5 C7.6,1.5 9,2.6 10,4 C11,2.6 12.4,1.5 14.2,1.5 C16.5,1.5 18.5,3 18.5,5.5 C18.5,8.5 16,11 10,16Z" fill="#303236"/></svg>
<svg style="left:1885px;top:296px" width="20" height="6" viewBox="0 0 20 6"><rect x="2" y="1.3" width="3.4" height="3.4" rx="0.8" fill="#303236"/><rect x="8" y="1.3" width="3.4" height="3.4" rx="0.8" fill="#303236"/><rect x="14" y="1.3" width="3.4" height="3.4" rx="0.8" fill="#303236"/></svg>
<div class="t" style="left:1292px;top:338px;font-size:14.4px;line-height:20px;color:#232427;">Nee</div>
<svg style="left:1855px;top:339px" width="20" height="18" viewBox="0 0 20 18"><path d="M10,16 C4,11 1.5,8.5 1.5,5.5 C1.5,3 3.5,1.5 5.8,1.5 C7.6,1.5 9,2.6 10,4 C11,2.6 12.4,1.5 14.2,1.5 C16.5,1.5 18.5,3 18.5,5.5 C18.5,8.5 16,11 10,16Z" fill="#303236"/></svg>
<svg style="left:1885px;top:345px" width="20" height="6" viewBox="0 0 20 6"><rect x="2" y="1.3" width="3.4" height="3.4" rx="0.8" fill="#303236"/><rect x="8" y="1.3" width="3.4" height="3.4" rx="0.8" fill="#303236"/><rect x="14" y="1.3" width="3.4" height="3.4" rx="0.8" fill="#303236"/></svg>
<div class="t" style="left:1292px;top:387px;font-size:14.4px;line-height:20px;color:#232427;">Tub</div>
<svg style="left:1855px;top:388px" width="20" height="18" viewBox="0 0 20 18"><path d="M10,16 C4,11 1.5,8.5 1.5,5.5 C1.5,3 3.5,1.5 5.8,1.5 C7.6,1.5 9,2.6 10,4 C11,2.6 12.4,1.5 14.2,1.5 C16.5,1.5 18.5,3 18.5,5.5 C18.5,8.5 16,11 10,16Z" fill="#303236"/></svg>
<svg style="left:1885px;top:394px" width="20" height="6" viewBox="0 0 20 6"><rect x="2" y="1.3" width="3.4" height="3.4" rx="0.8" fill="#303236"/><rect x="8" y="1.3" width="3.4" height="3.4" rx="0.8" fill="#303236"/><rect x="14" y="1.3" width="3.4" height="3.4" rx="0.8" fill="#303236"/></svg>
<div class="t" style="left:1292px;top:436px;font-size:14.4px;line-height:20px;color:#232427;">Tub</div>
<svg style="left:1855px;top:437px" width="20" height="18" viewBox="0 0 20 18"><path d="M10,16 C4,11 1.5,8.5 1.5,5.5 C1.5,3 3.5,1.5 5.8,1.5 C7.6,1.5 9,2.6 10,4 C11,2.6 12.4,1.5 14.2,1.5 C16.5,1.5 18.5,3 18.5,5.5 C18.5,8.5 16,11 10,16Z" fill="#303236"/></svg>
<svg style="left:1885px;top:443px" width="20" height="6" viewBox="0 0 20 6"><rect x="2" y="1.3" width="3.4" height="3.4" rx="0.8" fill="#303236"/><rect x="8" y="1.3" width="3.4" height="3.4" rx="0.8" fill="#303236"/><rect x="14" y="1.3" width="3.4" height="3.4" rx="0.8" fill="#303236"/></svg>
<div class="t" style="left:1292px;top:485px;font-size:14.4px;line-height:20px;color:#232427;">Tub</div>
<svg style="left:1855px;top:486px" width="20" height="18" viewBox="0 0 20 18"><path d="M10,16 C4,11 1.5,8.5 1.5,5.5 C1.5,3 3.5,1.5 5.8,1.5 C7.6,1.5 9,2.6 10,4 C11,2.6 12.4,1.5 14.2,1.5 C16.5,1.5 18.5,3 18.5,5.5 C18.5,8.5 16,11 10,16Z" fill="#303236"/></svg>
<svg style="left:1885px;top:492px" width="20" height="6" viewBox="0 0 20 6"><rect x="2" y="1.3" width="3.4" height="3.4" rx="0.8" fill="#303236"/><rect x="8" y="1.3" width="3.4" height="3.4" rx="0.8" fill="#303236"/><rect x="14" y="1.3" width="3.4" height="3.4" rx="0.8" fill="#303236"/></svg>
<div class="t" style="left:1292px;top:534px;font-size:14.4px;line-height:20px;color:#232427;">Poly</div>
<svg style="left:1855px;top:535px" width="20" height="18" viewBox="0 0 20 18"><path d="M10,16 C4,11 1.5,8.5 1.5,5.5 C1.5,3 3.5,1.5 5.8,1.5 C7.6,1.5 9,2.6 10,4 C11,2.6 12.4,1.5 14.2,1.5 C16.5,1.5 18.5,3 18.5,5.5 C18.5,8.5 16,11 10,16Z" fill="#303236"/></svg>
<svg style="left:1885px;top:541px" width="20" height="6" viewBox="0 0 20 6"><rect x="2" y="1.3" width="3.4" height="3.4" rx="0.8" fill="#303236"/><rect x="8" y="1.3" width="3.4" height="3.4" rx="0.8" fill="#303236"/><rect x="14" y="1.3" width="3.4" height="3.4" rx="0.8" fill="#303236"/></svg>
<div class="t" style="left:1292px;top:583px;font-size:14.4px;line-height:20px;color:#232427;">Poly</div>
<svg style="left:1855px;top:584px" width="20" height="18" viewBox="0 0 20 18"><path d="M10,16 C4,11 1.5,8.5 1.5,5.5 C1.5,3 3.5,1.5 5.8,1.5 C7.6,1.5 9,2.6 10,4 C11,2.6 12.4,1.5 14.2,1.5 C16.5,1.5 18.5,3 18.5,5.5 C18.5,8.5 16,11 10,16Z" fill="#303236"/></svg>
<svg style="left:1885px;top:590px" width="20" height="6" viewBox="0 0 20 6"><rect x="2" y="1.3" width="3.4" height="3.4" rx="0.8" fill="#303236"/><rect x="8" y="1.3" width="3.4" height="3.4" rx="0.8" fill="#303236"/><rect x="14" y="1.3" width="3.4" height="3.4" rx="0.8" fill="#303236"/></svg>
<div class="t" style="left:1292px;top:632px;font-size:14.4px;line-height:20px;color:#232427;">Tub</div>
<svg style="left:1855px;top:633px" width="20" height="18" viewBox="0 0 20 18"><path d="M10,16 C4,11 1.5,8.5 1.5,5.5 C1.5,3 3.5,1.5 5.8,1.5 C7.6,1.5 9,2.6 10,4 C11,2.6 12.4,1.5 14.2,1.5 C16.5,1.5 18.5,3 18.5,5.5 C18.5,8.5 16,11 10,16Z" fill="#303236"/></svg>
<svg style="left:1885px;top:639px" width="20" height="6" viewBox="0 0 20 6"><rect x="2" y="1.3" width="3.4" height="3.4" rx="0.8" fill="#303236"/><rect x="8" y="1.3" width="3.4" height="3.4" rx="0.8" fill="#303236"/><rect x="14" y="1.3" width="3.4" height="3.4" rx="0.8" fill="#303236"/></svg>
<div class="t" style="left:1292px;top:681px;font-size:14.4px;line-height:20px;color:#232427;">Tub</div>
<svg style="left:1855px;top:682px" width="20" height="18" viewBox="0 0 20 18"><path d="M10,16 C4,11 1.5,8.5 1.5,5.5 C1.5,3 3.5,1.5 5.8,1.5 C7.6,1.5 9,2.6 10,4 C11,2.6 12.4,1.5 14.2,1.5 C16.5,1.5 18.5,3 18.5,5.5 C18.5,8.5 16,11 10,16Z" fill="#303236"/></svg>
<svg style="left:1885px;top:688px" width="20" height="6" viewBox="0 0 20 6"><rect x="2" y="1.3" width="3.4" height="3.4" rx="0.8" fill="#303236"/><rect x="8" y="1.3" width="3.4" height="3.4" rx="0.8" fill="#303236"/><rect x="14" y="1.3" width="3.4" height="3.4" rx="0.8" fill="#303236"/></svg>
<div class="t" style="left:1292px;top:730px;font-size:14.4px;line-height:20px;color:#232427;">Tub</div>
<svg style="left:1855px;top:731px" width="20" height="18" viewBox="0 0 20 18"><path d="M10,16 C4,11 1.5,8.5 1.5,5.5 C1.5,3 3.5,1.5 5.8,1.5 C7.6,1.5 9,2.6 10,4 C11,2.6 12.4,1.5 14.2,1.5 C16.5,1.5 18.5,3 18.5,5.5 C18.5,8.5 16,11 10,16Z" fill="#303236"/></svg>
<svg style="left:1885px;top:737px" width="20" height="6" viewBox="0 0 20 6"><rect x="2" y="1.3" width="3.4" height="3.4" rx="0.8" fill="#303236"/><rect x="8" y="1.3" width="3.4" height="3.4" rx="0.8" fill="#303236"/><rect x="14" y="1.3" width="3.4" height="3.4" rx="0.8" fill="#303236"/></svg>
<div class="t" style="left:1292px;top:779px;font-size:14.4px;line-height:20px;color:#232427;">Tub</div>
<svg style="left:1855px;top:780px" width="20" height="18" viewBox="0 0 20 18"><path d="M10,16 C4,11 1.5,8.5 1.5,5.5 C1.5,3 3.5,1.5 5.8,1.5 C7.6,1.5 9,2.6 10,4 C11,2.6 12.4,1.5 14.2,1.5 C16.5,1.5 18.5,3 18.5,5.5 C18.5,8.5 16,11 10,16Z" fill="#303236"/></svg>
<svg style="left:1885px;top:786px" width="20" height="6" viewBox="0 0 20 6"><rect x="2" y="1.3" width="3.4" height="3.4" rx="0.8" fill="#303236"/><rect x="8" y="1.3" width="3.4" height="3.4" rx="0.8" fill="#303236"/><rect x="14" y="1.3" width="3.4" height="3.4" rx="0.8" fill="#303236"/></svg>
<div class="t" style="left:1292px;top:828px;font-size:14.4px;line-height:20px;color:#232427;">Tub</div>
<svg style="left:1855px;top:829px" width="20" height="18" viewBox="0 0 20 18"><path d="M10,16 C4,11 1.5,8.5 1.5,5.5 C1.5,3 3.5,1.5 5.8,1.5 C7.6,1.5 9,2.6 10,4 C11,2.6 12.4,1.5 14.2,1.5 C16.5,1.5 18.5,3 18.5,5.5 C18.5,8.5 16,11 10,16Z" fill="#303236"/></svg>
<svg style="left:1885px;top:835px" width="20" height="6" viewBox="0 0 20 6"><rect x="2" y="1.3" width="3.4" height="3.4" rx="0.8" fill="#303236"/><rect x="8" y="1.3" width="3.4" height="3.4" rx="0.8" fill="#303236"/><rect x="14" y="1.3" width="3.4" height="3.4" rx="0.8" fill="#303236"/></svg>
<div class="t" style="left:1292px;top:877px;font-size:14.4px;line-height:20px;color:#232427;">Tub</div>
<svg style="left:1855px;top:878px" width="20" height="18" viewBox="0 0 20 18"><path d="M10,16 C4,11 1.5,8.5 1.5,5.5 C1.5,3 3.5,1.5 5.8,1.5 C7.6,1.5 9,2.6 10,4 C11,2.6 12.4,1.5 14.2,1.5 C16.5,1.5 18.5,3 18.5,5.5 C18.5,8.5 16,11 10,16Z" fill="#303236"/></svg>
<svg style="left:1885px;top:884px" width="20" height="6" viewBox="0 0 20 6"><rect x="2" y="1.3" width="3.4" height="3.4" rx="0.8" fill="#303236"/><rect x="8" y="1.3" width="3.4" height="3.4" rx="0.8" fill="#303236"/><rect x="14" y="1.3" width="3.4" height="3.4" rx="0.8" fill="#303236"/></svg>
<svg style="left:1220px;top:183px" width="62" height="36" viewBox="0 0 62 36"><g transform="rotate(14 31 18)"><rect x="4" y="6" width="52" height="12" rx="6" fill="#2c3440"/><rect x="4" y="17" width="52" height="12" rx="6" fill="#252c36"/><ellipse cx="50" cy="17" rx="5" ry="11" fill="#39424f"/></g></svg>
<svg style="left:1220px;top:236px" width="62" height="28" viewBox="0 0 62 28"><path d="M4,4 L20,18 H58" stroke="#1e2228" stroke-width="5" fill="none" stroke-linecap="round" stroke-linejoin="round"/></svg>
<svg style="left:1234px;top:283px" width="36" height="34" viewBox="0 0 36 34"><ellipse cx="14" cy="19" rx="11" ry="12" fill="#1c1f1c"/><path d="M14,7 L24,3 C30,3 33,10 32,16 C31,24 26,28 22,28 L14,31Z" fill="#2c4a2a"/><ellipse cx="12" cy="19" rx="5" ry="6" fill="#111"/></svg>
<svg style="left:1234px;top:332px" width="36" height="34" viewBox="0 0 36 34"><ellipse cx="17" cy="17" rx="15" ry="15" fill="#3b3e42"/><ellipse cx="16" cy="17" rx="12" ry="13" fill="#1a1b1d"/><ellipse cx="16" cy="17" rx="8" ry="9" fill="#55565a"/><ellipse cx="16" cy="17" rx="6" ry="7" fill="#1a1b1d"/></svg>
<svg style="left:1210px;top:372px" width="80" height="50" viewBox="0 0 80 50"><g transform="translate(37,28) rotate(-32.0)"><rect x="0" y="-15" width="18.9" height="30" fill="#17181b"/><ellipse cx="18.9" cy="0" rx="12.0" ry="15" fill="#17181b"/><ellipse cx="0" cy="0" rx="12.0" ry="15" fill="#222428" stroke="#0e0f10" stroke-width="0.8"/><ellipse cx="0" cy="0" rx="3.2" ry="4" fill="#111"/></g></svg>
<svg style="left:1210px;top:421px" width="80" height="50" viewBox="0 0 80 50"><g transform="translate(38,28) rotate(-33.7)"><rect x="0" y="-13" width="18.0" height="26" fill="#17181b"/><ellipse cx="18.0" cy="0" rx="10.4" ry="13" fill="#17181b"/><ellipse cx="0" cy="0" rx="10.4" ry="13" fill="#222428" stroke="#0e0f10" stroke-width="0.8"/></g><path d="M46,9 L54,7 L58,12 L57,19" fill="#17181b"/></svg>
<svg style="left:1210px;top:470px" width="80" height="50" viewBox="0 0 80 50"><g transform="translate(33,35) rotate(-33.7)"><rect x="0" y="-7" width="10.8" height="14" fill="#222327"/><ellipse cx="10.8" cy="0" rx="5.2" ry="7" fill="#222327"/><ellipse cx="0" cy="0" rx="5.2" ry="7" fill="#2a2b2f" stroke="#0e0f10" stroke-width="0.8"/><ellipse cx="0" cy="0" rx="2.2" ry="3" fill="#111"/></g><g transform="translate(43,28) rotate(-36.9)"><rect x="0" y="-8" width="5.0" height="16" fill="#1b1c1f"/><ellipse cx="5.0" cy="0" rx="6.0" ry="8" fill="#1b1c1f"/><ellipse cx="0" cy="0" rx="6.0" ry="8" fill="#2a2b2f" stroke="#0e0f10" stroke-width="0.8"/></g><g transform="translate(47,25) rotate(-36.0)"><rect x="0" y="-6" width="13.6" height="12" fill="#26272b"/><ellipse cx="13.6" cy="0" rx="4.5" ry="6" fill="#26272b"/><ellipse cx="0" cy="0" rx="4.5" ry="6" fill="#2e2f33" stroke="#0e0f10" stroke-width="0.8"/></g></svg>
<svg style="left:1210px;top:519px" width="80" height="50" viewBox="0 0 80 50"><g transform="translate(36,31) rotate(-33.7)"><rect x="0" y="-12" width="21.6" height="24" fill="#17181b"/><ellipse cx="21.6" cy="0" rx="8.4" ry="12" fill="#17181b"/><ellipse cx="0" cy="0" rx="8.4" ry="12" fill="#222428" stroke="#0e0f10" stroke-width="0.8"/></g></svg>
<svg style="left:1210px;top:568px" width="80" height="50" viewBox="0 0 80 50"><g transform="translate(36,31) rotate(-33.7)"><rect x="0" y="-12" width="21.6" height="24" fill="#17181b"/><ellipse cx="21.6" cy="0" rx="8.4" ry="12" fill="#17181b"/><ellipse cx="0" cy="0" rx="8.4" ry="12" fill="#222428" stroke="#0e0f10" stroke-width="0.8"/></g></svg>
<svg style="left:1210px;top:617px" width="80" height="50" viewBox="0 0 80 50"><g transform="translate(40,28) rotate(-33.7)"><rect x="0" y="-15" width="14.4" height="30" fill="#17181b"/><ellipse cx="14.4" cy="0" rx="12.8" ry="15" fill="#17181b"/><ellipse cx="0" cy="0" rx="12.8" ry="15" fill="#222428" stroke="#0e0f10" stroke-width="0.8"/><ellipse cx="0" cy="0" rx="2.5" ry="3" fill="#111"/></g></svg>
<svg style="left:1210px;top:666px" width="80" height="50" viewBox="0 0 80 50"><g transform="translate(40,25) rotate(14)"><rect x="-27" y="-7" width="54" height="14" rx="3" fill="#17181b"/><rect x="-21" y="-4.5" width="42" height="9" fill="#3e4044"/><path d="M-21,-1.5 H21 M-21,1.5 H21" stroke="#17181b" stroke-width="0.8"/><ellipse cx="-25" cy="0" rx="3" ry="7" fill="#26272b"/></g></svg>
<svg style="left:1210px;top:715px" width="80" height="50" viewBox="0 0 80 50"><g transform="translate(39,29) rotate(-33.7)"><rect x="0" y="-15" width="14.4" height="30" fill="#17181b"/><ellipse cx="14.4" cy="0" rx="12.8" ry="15" fill="#17181b"/><ellipse cx="0" cy="0" rx="12.8" ry="15" fill="#222428" stroke="#0e0f10" stroke-width="0.8"/></g><ellipse cx="39" cy="29" rx="6" ry="7" fill="#0c0c0d"/><path d="M37,28 L42,26" stroke="#888" stroke-width="1.2"/></svg>
<svg style="left:1210px;top:764px" width="80" height="50" viewBox="0 0 80 50"><g transform="translate(34,34) rotate(-38.7)"><rect x="0" y="-9" width="25.6" height="18" fill="#17181b"/><ellipse cx="25.6" cy="0" rx="6.3" ry="9" fill="#17181b"/><ellipse cx="0" cy="0" rx="6.3" ry="9" fill="#222428" stroke="#0e0f10" stroke-width="0.8"/><ellipse cx="0" cy="0" rx="2.1" ry="3" fill="#111"/></g></svg>
<svg style="left:1210px;top:813px" width="80" height="50" viewBox="0 0 80 50"><g transform="translate(34,34) rotate(-38.7)"><rect x="0" y="-9" width="25.6" height="18" fill="#17181b"/><ellipse cx="25.6" cy="0" rx="6.3" ry="9" fill="#17181b"/><ellipse cx="0" cy="0" rx="6.3" ry="9" fill="#222428" stroke="#0e0f10" stroke-width="0.8"/><ellipse cx="0" cy="0" rx="1.4" ry="2" fill="#111"/></g><g transform="translate(46,24) rotate(-36.9)"><rect x="0" y="-11" width="10.0" height="22" fill="#17181b"/><ellipse cx="10.0" cy="0" rx="7.7" ry="11" fill="#17181b"/><ellipse cx="0" cy="0" rx="7.7" ry="11" fill="#222428" stroke="#0e0f10" stroke-width="0.8"/></g></svg>
<svg style="left:1210px;top:862px" width="80" height="50" viewBox="0 0 80 50"><g transform="translate(37,30) rotate(-36.3)"><rect x="0" y="-14" width="18.6" height="28" fill="#17181b"/><ellipse cx="18.6" cy="0" rx="11.2" ry="14" fill="#17181b"/><ellipse cx="0" cy="0" rx="11.2" ry="14" fill="#222428" stroke="#0e0f10" stroke-width="0.8"/></g><path d="M44,9 L52,7 L60,14 L58,22" fill="#17181b"/></svg><div class="a" style="left:1314px;top:126px;width:500px;height:874px;background:#f4f5f7;border-radius:5px;overflow:hidden;box-shadow:0 2px 10px rgba(0,0,0,0.25)">
<div class="a" style="left:0;top:0;width:500px;height:39px;background:#fff;border-bottom:1px solid #dee0e3"></div>
<div class="a" style="left:9.5px;top:47px;width:481px;height:211px;background:#ecedf1;border:1px solid #d3d5d9;border-radius:2px"></div>
</div>
<div class="t" style="left:1330px;top:136px;font-size:13.7px;line-height:20px;color:#212529;-webkit-text-stroke:0.35px #212529">Tube Roller System (Custom, Latheless)</div>
<svg style="left:1787px;top:138px" width="14" height="14" viewBox="0 0 14 14"><path d="M3,3 L11,11 M11,3 L3,11" stroke="#333" stroke-width="2"/></svg>
<svg style="left:1534px;top:249px" width="60" height="60" viewBox="0 0 60 60"><circle cx="30" cy="29.5" r="22.5" fill="none" stroke="#d5d6d9" stroke-width="4"/><path d="M37.7,8.4 A22.5,22.5 0 0 1 50.1,39.6" fill="none" stroke="#2a6ad2" stroke-width="4" stroke-linecap="round"/></svg>
<div class="t" style="left:1330px;top:405.5px;font-size:13.9px;line-height:20px;color:#212529;">Effective Length</div>
<div class="a" style="left:1438px;top:400px;width:360px;height:30px;background:#fff;border:1px solid #cfd3d8;border-radius:2px"></div>
<div class="t" style="left:1448px;top:405.5px;font-size:13.9px;line-height:20px;color:#212529;">7 in</div>
<div class="t" style="left:1330px;top:451.5px;font-size:13.9px;line-height:20px;color:#212529;">Tube OD</div>
<div class="a" style="left:1395px;top:446px;width:403px;height:30px;background:#fff;border:1px solid #cfd3d8;border-radius:2px"></div>
<div class="t" style="left:1405px;top:451.5px;font-size:13.9px;line-height:20px;color:#212529;">2 in</div>
<div class="t" style="left:1330px;top:497.5px;font-size:13.9px;line-height:20px;color:#212529;">Tube ID</div>
<div class="a" style="left:1388px;top:492px;width:410px;height:30px;background:#fff;border:1px solid #cfd3d8;border-radius:2px"></div>
<div class="t" style="left:1398px;top:497.5px;font-size:13.9px;line-height:20px;color:#212529;">1.875 in</div>
<div class="t" style="left:1330px;top:543.5px;font-size:13.9px;line-height:20px;color:#212529;">Axle Type</div>
<div class="a" style="left:1398px;top:538px;width:400px;height:30px;background:#f3f4f6;border:1px solid #cfd3d8;border-radius:2px"></div>
<div class="t" style="left:1408px;top:543.5px;font-size:13.9px;line-height:20px;color:#212529;">1/2" Rounded Hex Deadaxle</div>
<svg style="left:1774px;top:550px" width="12" height="8" viewBox="0 0 12 8"><path d="M1.5,1.5 H10.5 L6,6.5Z" fill="#555a64"/></svg>
<div class="t" style="left:1330px;top:617.5px;font-size:13.9px;line-height:20px;color:#212529;">Right Endcap Type</div>
<div class="a" style="left:1454px;top:612px;width:344px;height:30px;background:#f3f4f6;border:1px solid #cfd3d8;border-radius:2px"></div>
<div class="t" style="left:1464px;top:617.5px;font-size:13.9px;line-height:20px;color:#212529;">HTD</div>
<svg style="left:1774px;top:624px" width="12" height="8" viewBox="0 0 12 8"><path d="M1.5,1.5 H10.5 L6,6.5Z" fill="#555a64"/></svg>
<div class="t" style="left:1330px;top:663.5px;font-size:13.9px;line-height:20px;color:#212529;">Right Endcap Teeth</div>
<div class="a" style="left:1458px;top:658px;width:340px;height:30px;background:#fff;border:1px solid #cfd3d8;border-radius:2px"></div>
<div class="t" style="left:1468px;top:663.5px;font-size:13.9px;line-height:20px;color:#212529;">24</div>
<div class="t" style="left:1330px;top:709.5px;font-size:13.9px;line-height:20px;color:#212529;">Right Spacer Length</div>
<div class="a" style="left:1464px;top:704px;width:334px;height:30px;background:#fff;border:1px solid #cfd3d8;border-radius:2px"></div>
<div class="t" style="left:1474px;top:709.5px;font-size:13.9px;line-height:20px;color:#212529;">0.125 in</div>
<div class="t" style="left:1330px;top:755.5px;font-size:13.9px;line-height:20px;color:#212529;">Right Shaft Stickout</div>
<div class="a" style="left:1461px;top:750px;width:337px;height:30px;background:#fff;border:1px solid #cfd3d8;border-radius:2px"></div>
<div class="t" style="left:1471px;top:755.5px;font-size:13.9px;line-height:20px;color:#212529;">0 in</div>
<div class="t" style="left:1330px;top:801.5px;font-size:13.9px;line-height:20px;color:#212529;">Left Endcap Type</div>
<div class="a" style="left:1444px;top:796px;width:354px;height:30px;background:#f3f4f6;border:1px solid #cfd3d8;border-radius:2px"></div>
<div class="t" style="left:1454px;top:801.5px;font-size:13.9px;line-height:20px;color:#212529;">HTD</div>
<svg style="left:1774px;top:808px" width="12" height="8" viewBox="0 0 12 8"><path d="M1.5,1.5 H10.5 L6,6.5Z" fill="#555a64"/></svg>
<div class="t" style="left:1330px;top:847.5px;font-size:13.9px;line-height:20px;color:#212529;">Left Endcap Teeth</div>
<div class="a" style="left:1449px;top:842px;width:349px;height:30px;background:#fff;border:1px solid #cfd3d8;border-radius:2px"></div>
<div class="t" style="left:1459px;top:847.5px;font-size:13.9px;line-height:20px;color:#212529;">24</div>
<div class="t" style="left:1330px;top:893.5px;font-size:13.9px;line-height:20px;color:#212529;">Left Spacer Lenth</div>
<div class="a" style="left:1446px;top:888px;width:352px;height:30px;background:#fff;border:1px solid #cfd3d8;border-radius:2px"></div>
<div class="t" style="left:1456px;top:893.5px;font-size:13.9px;line-height:20px;color:#212529;">0.125 in</div>
<div class="t" style="left:1330px;top:939.5px;font-size:13.9px;line-height:20px;color:#212529;">Left Shaft Stickout</div>
<div class="a" style="left:1451px;top:934px;width:347px;height:30px;background:#fff;border:1px solid #cfd3d8;border-radius:2px"></div>
<div class="t" style="left:1461px;top:939.5px;font-size:13.9px;line-height:20px;color:#212529;">0 in</div>
<div class="t" style="left:1330px;top:584px;font-size:13.9px;line-height:20px;color:#212529;">Inset Bearing Flange</div>
<svg style="left:1464px;top:584px" width="18" height="18" viewBox="0 0 18 18"><rect x="0.5" y="0.5" width="16" height="16" rx="2.5" fill="#2a6ad2"/><path d="M4,8.5 L7,11.5 L13,5.5" stroke="#fff" stroke-width="2" fill="none"/></svg>
<div class="a" style="left:1314px;top:949px;width:500px;height:51px;background:#fff;border-top:1px solid #dee0e3;border-radius:0 0 5px 5px"></div>
<svg style="left:1336px;top:967px" width="18" height="17" viewBox="0 0 18 17"><path d="M9,15.5 C3.5,11 1,8.5 1,5.5 C1,3 3,1 5.3,1 C7,1 8.2,2 9,3.3 C9.8,2 11,1 12.7,1 C15,1 17,3 17,5.5 C17,8.5 14.5,11 9,15.5Z" fill="#666a78"/></svg>
<div class="a" style="left:1725px;top:960px;width:79px;height:30px;background:#198754;border-radius:3px"></div>
<svg style="left:1736px;top:967px" width="16" height="16" viewBox="0 0 16 16"><path d="M8,1.5 V14.5 M1.5,8 H14.5" stroke="#fff" stroke-width="1.8"/></svg>
<div class="t" style="left:1758px;top:965.5px;font-size:14px;line-height:20px;color:#fff;">Insert</div>
<div class="a" style="left:1809px;top:396px;width:2px;height:250px;background:#8a8a8a;border-radius:1px"></div><div class="a" style="left:0;top:1050px;width:1919px;height:29px;background:#d8d8d8"></div>
<div class="a" style="left:0;top:1050px;width:39px;height:29px;background:#f5f5f5;border-right:1px solid #dcdcdc"></div>
<svg style="left:0px;top:1050px" width="39" height="30" viewBox="0 0 39 30"><rect x="10" y="8" width="12" height="7" fill="#222"/><circle cx="21" cy="15.5" r="5.5" fill="#f5f5f5" stroke="#222" stroke-width="2"/><path d="M25,19.5 L29,23" stroke="#222" stroke-width="2.2"/></svg>
<div class="a" style="left:40px;top:1050px;width:33px;height:29px;background:#d3d3d3"></div>
<svg style="left:40px;top:1050px" width="33" height="30" viewBox="0 0 33 30"><path d="M16.5,8 V22 M9.5,15 H23.5" stroke="#555" stroke-width="2.4"/></svg>
<svg style="left:73px;top:1050px" width="175" height="30" viewBox="0 0 175 30">
<path d="M0,0 H40 L48,14 L40,28 H0Z" fill="#e6e6e6"/>
<path d="M40,0 H160 L170,14 L160,28 H38 L47,14Z" fill="#f4f4f4"/>
<path d="M40,0 L48,14 L40,28" fill="none" stroke="#d0d0d0" stroke-width="1"/>
<path d="M160,0 L170,14 L160,28" fill="none" stroke="#d0d0d0" stroke-width="1"/>
<path d="M10,14 L18.5,6 L27,14 H25 V22 H20.5 V17 H16.5 V22 H12 V14Z" fill="#555"/><rect x="22" y="6.5" width="2.8" height="5" fill="#555"/>
</svg>
<div class="t" style="left:130px;top:1053px;font-size:13.5px;line-height:20px;color:#555;">Exercise 7 - Ver</div>
<div class="a" style="left:247px;top:1050px;width:201px;height:27px;background:#e9e9e9;border-radius:0 0 5px 5px;box-shadow:0 1px 1px #c8c8c8"></div>
<div class="a" style="left:449px;top:1050px;width:200px;height:27px;background:#fff;border-bottom:2px solid #1f56b3;border-radius:0 0 3px 3px"></div>
<div class="a" style="left:650px;top:1050px;width:201px;height:27px;background:#e9e9e9;border-radius:0 0 5px 5px;box-shadow:0 1px 1px #c8c8c8"></div>
<svg style="left:259px;top:1056px" width="16" height="16" viewBox="0 0 16 16"><circle cx="7.5" cy="7.5" r="7" fill="#7aa3d8"/><circle cx="7.5" cy="7.5" r="3" fill="#fff"/><rect x="6.8" y="0.5" width="1.4" height="2.3" fill="#fff"/><rect x="6.8" y="12.2" width="1.4" height="2.3" fill="#fff"/></svg>
<svg style="left:277px;top:1054px" width="17" height="19" viewBox="0 0 17 19"><path d="M1.5,3.5 L3.5,1.5 H13 L15,3.5 V17.5 H3.5 L1.5,15.5Z" fill="#fff" stroke="#222" stroke-width="1"/><rect x="3" y="3" width="9" height="9" fill="#888" stroke="#222" stroke-width="0.8"/><path d="M1.5,3.5 L3,3 M12,12 L15,17.5 M3.5,12 V17.5" stroke="#222" stroke-width="0.8"/></svg>
<div class="t" style="left:300px;top:1053.5px;font-size:14px;line-height:20px;color:#555;">Exercise 7 Assembly</div>
<svg style="left:461px;top:1056px" width="16" height="16" viewBox="0 0 16 16"><circle cx="7.5" cy="7.5" r="7" fill="#7aa3d8"/><circle cx="7.5" cy="7.5" r="3" fill="#fff"/><rect x="6.8" y="0.5" width="1.4" height="2.3" fill="#fff"/><rect x="6.8" y="12.2" width="1.4" height="2.3" fill="#fff"/></svg>
<svg style="left:479px;top:1054px" width="17" height="19" viewBox="0 0 17 19"><path d="M1.5,3.5 L3.5,1.5 H13 L15,3.5 V17.5 H3.5 L1.5,15.5Z" fill="#fff" stroke="#222" stroke-width="1"/><rect x="3" y="3" width="9" height="9" fill="#888" stroke="#222" stroke-width="0.8"/><path d="M1.5,3.5 L3,3 M12,12 L15,17.5 M3.5,12 V17.5" stroke="#222" stroke-width="0.8"/></svg>
<div class="t" style="left:502px;top:1053.5px;font-size:14px;line-height:20px;color:#333;">Assembly 1</div>
<svg style="left:662px;top:1054px" width="20" height="19" viewBox="0 0 20 19"><path d="M1.5,6 L3.5,4 H7 V17.5 H1.5Z M7,17.5 H4 V6 H7" fill="#fff" stroke="#222" stroke-width="1"/><path d="M9,3 L11,1 H17 L18.5,3 V17.5 H9Z M9,3 H18.5 M12,3 V17.5" fill="#fff" stroke="#222" stroke-width="1"/></svg>
<div class="t" style="left:684px;top:1053.5px;font-size:13.7px;line-height:20px;color:#555;">Exercise 7 Part Studio</div>
</body></html>
